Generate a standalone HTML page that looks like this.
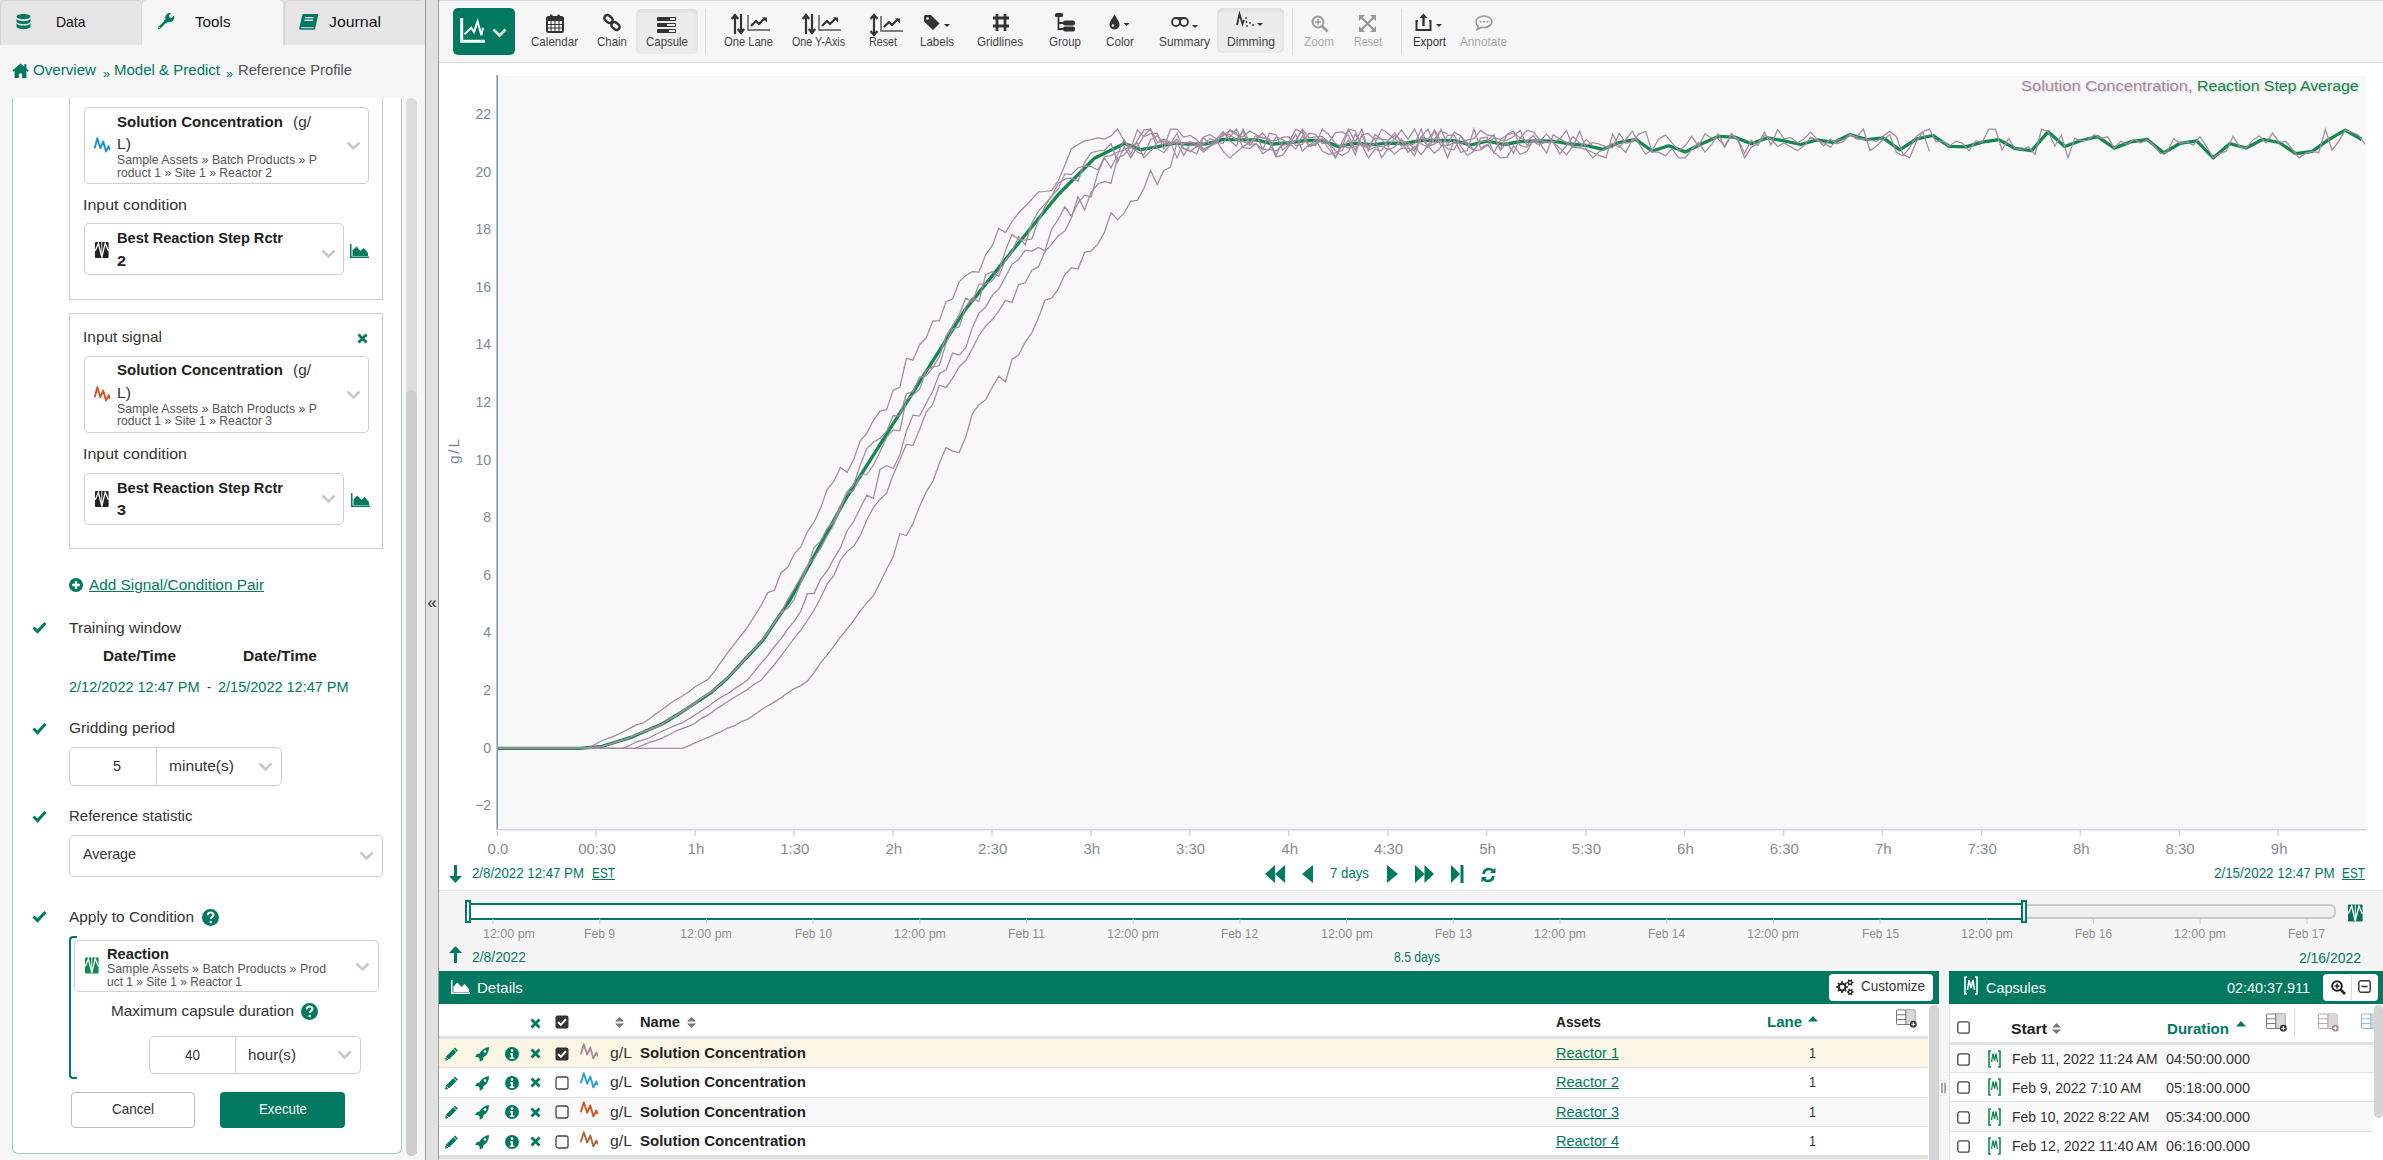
<!DOCTYPE html>
<html><head><meta charset="utf-8"><style>
html,body{margin:0;padding:0}
body{width:2383px;height:1160px;overflow:hidden;position:relative;background:#fff;font-family:"Liberation Sans",sans-serif}
.t{position:absolute;white-space:pre;line-height:1.117;transform-origin:0 0}
svg{overflow:visible}
</style></head><body>
<div style="position:absolute;left:0px;top:0px;width:425px;height:1160px;background:#f6f6f6"></div>
<div style="position:absolute;left:0px;top:0px;width:425px;height:45px;background:#e4e4e4"></div>
<div style="position:absolute;left:0px;top:0px;width:142px;height:45px;background:#e6e6e6;border-radius:5px 5px 0 0;box-shadow:inset 1px 1px 0 #d4d4d4, inset -1px 0 0 #d4d4d4"></div>
<div style="position:absolute;left:284px;top:0px;width:141px;height:45px;background:#e6e6e6;border-radius:5px 5px 0 0;box-shadow:inset 1px 1px 0 #d4d4d4"></div>
<div style="position:absolute;left:141px;top:0px;width:143px;height:45px;background:#f6f6f6;border-radius:5px 5px 0 0;box-shadow:inset 1px 0 0 #dadada, inset -1px 0 0 #dadada"></div>
<div style="position:absolute;left:142px;top:44px;width:141px;height:2px;background:#f6f6f6"></div>
<svg style="position:absolute;left:16px;top:14px;" width="15" height="16" viewBox="0 0 15 16"><g fill="#007960"><ellipse cx="7.5" cy="2.6" rx="7" ry="2.6"/><path d="M0.5 4.6c0 1.5 3.1 2.6 7 2.6s7-1.1 7-2.6v3c0 1.5-3.1 2.6-7 2.6s-7-1.1-7-2.6z"/><path d="M0.5 9c0 1.5 3.1 2.6 7 2.6s7-1.1 7-2.6v3.6c0 1.5-3.1 2.6-7 2.6s-7-1.1-7-2.6z"/></g></svg>
<svg style="position:absolute;left:157px;top:13px;" width="18" height="17" viewBox="0 0 18 17"><path fill="none" stroke="#007960" stroke-width="2.6" stroke-linecap="round" d="M2.2 14.8L9.2 7.8"/><path fill="#007960" d="M16.9 2.6l-2.3 2.3-2.1-.5-.5-2.1L14.3.1c-1.7-.4-3.5.1-4.7 1.3-1.3 1.3-1.7 3.2-1.1 4.8l-1.6 1.6 2.6 2.6 1.6-1.6c1.6.6 3.5.2 4.8-1.1 1.2-1.2 1.6-3 1.3-4.7z"/><circle cx="2.3" cy="14.7" r=".6" fill="#f6f6f6"/></svg>
<svg style="position:absolute;left:299px;top:14px;" width="19" height="16" viewBox="0 0 19 16"><path fill="#007960" d="M4.5 0H18.5c.5 0 .8.4.7.9L16.2 14.2c-.2.9-.9 1.5-1.8 1.5H1.2c-.7 0-1.1-.6-1-1.2L.7 12.2 3.3 1C3.5.4 4 0 4.5 0z"/><path fill="#e6e6e6" d="M6.2 3h8.5l-.3 1.3H5.9zM5.6 5.6h8.5l-.3 1.3H5.3zM2.2 13.2h12.6l-.3 1.1H2z"/></svg>
<svg style="position:absolute;left:12px;top:63px;" width="17" height="15" viewBox="0 0 17 15"><path fill="#007960" d="M8.5 0.6L0.3 7.6l1 1.2 1.3-1.1V15h4.3v-4.6h3.2V15h4.3V7.7l1.3 1.1 1-1.2-2.3-2V1.2h-2.2v2.6z"/></svg>
<div style="position:absolute;left:12px;top:98px;width:390px;height:1056px;background:#fff;border:1px solid #9fcfc3;border-top:none;border-radius:0 0 6px 6px;box-sizing:border-box"></div>
<div style="position:absolute;left:406px;top:98px;width:11px;height:1058px;background:#dcdcdc;border-radius:6px"></div>
<div style="position:absolute;left:406px;top:390px;width:11px;height:766px;background:#cfcfcf;border-radius:6px"></div>
<div style="position:absolute;left:425px;top:0px;width:14px;height:1160px;background:#e1e1e1;border-left:1px solid #999;border-right:1px solid #999;box-sizing:border-box"></div>
<div style="position:absolute;left:69px;top:98px;width:314px;height:202px;border:1px solid #cfcfcf;border-top:none;box-sizing:border-box"></div>
<div style="position:absolute;left:83.5px;top:106.5px;width:285px;height:77px;border:1px solid #cfcfcf;border-radius:5px;box-sizing:border-box;background:#fff"></div>
<svg style="position:absolute;left:94px;top:137px;" width="17" height="16" viewBox="0 0 17 16"><path d="M0.9 10.5 L3.3 1.2 L6.4 11.2 L9.2 4.6 L12 14.6 L14.7 9.2 L15.4 12" fill="none" stroke="#1a8fd9" stroke-width="1.9" stroke-linejoin="round" stroke-linecap="round"/></svg>
<svg style="position:absolute;left:346px;top:141px;" width="15" height="10" viewBox="0 0 15 10"><path d="M1.5 1.5l6 6 6-6" fill="none" stroke="#c9c9c9" stroke-width="2.6"/></svg>
<div style="position:absolute;left:83.5px;top:223.3px;width:260px;height:52px;border:1px solid #cfcfcf;border-radius:5px;box-sizing:border-box;background:#fff"></div>
<svg style="position:absolute;left:95px;top:242px;" width="14" height="16" viewBox="0 0 14 16"><rect x="0" y="0" width="13.6" height="16" rx="1" fill="#222"/><path d="M0.3 8.8 L3.4 1.3 L6.8 15.2 M6.8 15.2 L10.2 1.3 L13.4 8.8" fill="none" stroke="#fff" stroke-width="1.3"/><path d="M6.8 0v16" stroke="#fff" stroke-width="0.9"/></svg>
<svg style="position:absolute;left:321px;top:249px;" width="15" height="10" viewBox="0 0 15 10"><path d="M1.5 1.5l6 6 6-6" fill="none" stroke="#c9c9c9" stroke-width="2.6"/></svg>
<svg style="position:absolute;left:350px;top:244px;" width="19" height="14" viewBox="0 0 19 14"><path d="M0 0v14h19v-1.5H1.5V0z" fill="#007960"/><path d="M2.5 12V6.5l4-4 4 4.5 3-3 4.5 5V12z" fill="#007960"/></svg>
<div style="position:absolute;left:69px;top:312.7px;width:314px;height:236px;border:1px solid #cfcfcf;box-sizing:border-box"></div>
<svg style="position:absolute;left:357px;top:333px;" width="11" height="11" viewBox="0 0 11 11"><path d="M1.5 1.5l8 8M9.5 1.5l-8 8" stroke="#007960" stroke-width="2.8"/></svg>
<div style="position:absolute;left:83.5px;top:355.5px;width:285px;height:77px;border:1px solid #cfcfcf;border-radius:5px;box-sizing:border-box;background:#fff"></div>
<svg style="position:absolute;left:94px;top:386px;" width="17" height="16" viewBox="0 0 17 16"><path d="M0.9 10.5 L3.3 1.2 L6.4 11.2 L9.2 4.6 L12 14.6 L14.7 9.2 L15.4 12" fill="none" stroke="#d2541f" stroke-width="1.9" stroke-linejoin="round" stroke-linecap="round"/></svg>
<svg style="position:absolute;left:346px;top:390px;" width="15" height="10" viewBox="0 0 15 10"><path d="M1.5 1.5l6 6 6-6" fill="none" stroke="#c9c9c9" stroke-width="2.6"/></svg>
<div style="position:absolute;left:83.5px;top:472.6px;width:260px;height:52px;border:1px solid #cfcfcf;border-radius:5px;box-sizing:border-box;background:#fff"></div>
<svg style="position:absolute;left:95px;top:491px;" width="14" height="16" viewBox="0 0 14 16"><rect x="0" y="0" width="13.6" height="16" rx="1" fill="#222"/><path d="M0.3 8.8 L3.4 1.3 L6.8 15.2 M6.8 15.2 L10.2 1.3 L13.4 8.8" fill="none" stroke="#fff" stroke-width="1.3"/><path d="M6.8 0v16" stroke="#fff" stroke-width="0.9"/></svg>
<svg style="position:absolute;left:321px;top:494px;" width="15" height="10" viewBox="0 0 15 10"><path d="M1.5 1.5l6 6 6-6" fill="none" stroke="#c9c9c9" stroke-width="2.6"/></svg>
<svg style="position:absolute;left:351px;top:493px;" width="19" height="14" viewBox="0 0 19 14"><path d="M0 0v14h19v-1.5H1.5V0z" fill="#007960"/><path d="M2.5 12V6.5l4-4 4 4.5 3-3 4.5 5V12z" fill="#007960"/></svg>
<svg style="position:absolute;left:69px;top:578px;" width="14" height="14" viewBox="0 0 14 14"><circle cx="7" cy="7" r="7" fill="#007960"/><path d="M7 3.2v7.6M3.2 7h7.6" stroke="#fff" stroke-width="2.4"/></svg>
<svg style="position:absolute;left:32px;top:621px;" width="15" height="12" viewBox="0 0 15 12"><path d="M1.5 6.5l4 4 8-8.5" fill="none" stroke="#007960" stroke-width="3"/></svg>
<svg style="position:absolute;left:32px;top:722px;" width="15" height="12" viewBox="0 0 15 12"><path d="M1.5 6.5l4 4 8-8.5" fill="none" stroke="#007960" stroke-width="3"/></svg>
<div style="position:absolute;left:69px;top:746.7px;width:213px;height:39px;border:1px solid #cfcfcf;border-radius:5px;box-sizing:border-box;background:#fff"></div>
<div style="position:absolute;left:156px;top:747px;width:1px;height:38px;background:#cfcfcf"></div>
<svg style="position:absolute;left:258px;top:762px;" width="15" height="10" viewBox="0 0 15 10"><path d="M1.5 1.5l6 6 6-6" fill="none" stroke="#c9c9c9" stroke-width="2.6"/></svg>
<svg style="position:absolute;left:32px;top:810px;" width="15" height="12" viewBox="0 0 15 12"><path d="M1.5 6.5l4 4 8-8.5" fill="none" stroke="#007960" stroke-width="3"/></svg>
<div style="position:absolute;left:69px;top:834.6px;width:314px;height:42px;border:1px solid #cfcfcf;border-radius:5px;box-sizing:border-box;background:#fff"></div>
<svg style="position:absolute;left:359px;top:851px;" width="15" height="10" viewBox="0 0 15 10"><path d="M1.5 1.5l6 6 6-6" fill="none" stroke="#c9c9c9" stroke-width="2.6"/></svg>
<svg style="position:absolute;left:32px;top:910px;" width="15" height="12" viewBox="0 0 15 12"><path d="M1.5 6.5l4 4 8-8.5" fill="none" stroke="#007960" stroke-width="3"/></svg>
<svg style="position:absolute;left:202px;top:909px;" width="17" height="17" viewBox="0 0 17 17"><circle cx="8.5" cy="8.5" r="8.5" fill="#007960"/><path d="M5.8 6.3c0-1.7 1.2-2.8 2.8-2.8s2.8 1 2.8 2.5c0 2-2.6 2-2.6 3.9" fill="none" stroke="#fff" stroke-width="2.1"/><circle cx="8.7" cy="13" r="1.25" fill="#fff"/></svg>
<div style="position:absolute;left:69px;top:935.5px;width:8px;height:143px;border:2px solid #007960;border-right:none;border-radius:4px 0 0 4px;box-sizing:border-box"></div>
<div style="position:absolute;left:73.5px;top:939.6px;width:305px;height:52.6px;border:1px solid #cfcfcf;border-radius:5px;box-sizing:border-box;background:#fff"></div>
<svg style="position:absolute;left:85px;top:957px;" width="14" height="17" viewBox="0 0 14 16"><rect x="0" y="0" width="13.6" height="16" rx="1" fill="#0f8a4b"/><path d="M0.3 8.8 L3.4 1.3 L6.8 15.2 M6.8 15.2 L10.2 1.3 L13.4 8.8" fill="none" stroke="#fff" stroke-width="1.3"/><path d="M6.8 0v16" stroke="#fff" stroke-width="0.9"/></svg>
<svg style="position:absolute;left:355px;top:962px;" width="15" height="10" viewBox="0 0 15 10"><path d="M1.5 1.5l6 6 6-6" fill="none" stroke="#c9c9c9" stroke-width="2.6"/></svg>
<svg style="position:absolute;left:301px;top:1003px;" width="17" height="17" viewBox="0 0 17 17"><circle cx="8.5" cy="8.5" r="8.5" fill="#007960"/><path d="M5.8 6.3c0-1.7 1.2-2.8 2.8-2.8s2.8 1 2.8 2.5c0 2-2.6 2-2.6 3.9" fill="none" stroke="#fff" stroke-width="2.1"/><circle cx="8.7" cy="13" r="1.25" fill="#fff"/></svg>
<div style="position:absolute;left:148.5px;top:1035.7px;width:212px;height:38.6px;border:1px solid #cfcfcf;border-radius:5px;box-sizing:border-box;background:#fff"></div>
<div style="position:absolute;left:235px;top:1036px;width:1px;height:38px;background:#cfcfcf"></div>
<svg style="position:absolute;left:337px;top:1050px;" width="15" height="10" viewBox="0 0 15 10"><path d="M1.5 1.5l6 6 6-6" fill="none" stroke="#c9c9c9" stroke-width="2.6"/></svg>
<div style="position:absolute;left:70.5px;top:1092.4px;width:124px;height:35.8px;border:1px solid #bdbdbd;border-radius:4px;box-sizing:border-box;background:#fff"></div>
<div style="position:absolute;left:220px;top:1092.4px;width:125px;height:35.8px;background:#007960;border-radius:4px"></div>
<div style="position:absolute;left:439px;top:0px;width:1944px;height:63px;background:#f6f6f6;border-top:1px solid #dedede;border-bottom:1px solid #dcdcdc;box-sizing:border-box"></div>
<div style="position:absolute;left:439px;top:63px;width:1944px;height:827px;background:#fff"></div>
<div style="position:absolute;left:453px;top:8px;width:62px;height:47px;background:#007960;border-radius:5px"></div>
<svg style="position:absolute;left:460px;top:18px;" width="26" height="26" viewBox="0 0 26 26"><path d="M1.7 0v23.3H25" fill="none" stroke="#fff" stroke-width="3"/><path d="M4.5 16.2L11.2 9.8 14.1 14.1 17.6 3.4 21.4 17.3 23 9.8" fill="none" stroke="#fff" stroke-width="2"/></svg>
<svg style="position:absolute;left:492px;top:28px;" width="15" height="10" viewBox="0 0 15 10"><path d="M1.5 1.5l6 6 6-6" fill="none" stroke="#ddd" stroke-width="2.8"/></svg>
<svg style="position:absolute;left:546px;top:14px;" width="18" height="19" viewBox="0 0 18 19"><rect x="1" y="3" width="16" height="15" rx="1.5" fill="none" stroke="#333" stroke-width="2"/><rect x="1" y="3" width="16" height="4" fill="#333"/><rect x="4" y="0.5" width="2.5" height="5" rx="1" fill="#333"/><rect x="11.5" y="0.5" width="2.5" height="5" rx="1" fill="#333"/><path d="M1 10.5h16M1 14h16M5 7v11M9 7v11M13 7v11" stroke="#333" stroke-width="1"/></svg>
<svg style="position:absolute;left:603px;top:14px;" width="19" height="18" viewBox="0 0 19 18"><rect x="1" y="2" width="9" height="6" rx="3" transform="rotate(40 5.5 5)" fill="none" stroke="#333" stroke-width="2.4"/><rect x="8" y="9" width="9" height="6" rx="3" transform="rotate(40 12.5 12)" fill="none" stroke="#333" stroke-width="2.4"/></svg>
<div style="position:absolute;left:636px;top:9px;width:62px;height:45px;background:#ececec;border-radius:5px;box-shadow:inset 0 2px 4px rgba(0,0,0,.08)"></div>
<svg style="position:absolute;left:657px;top:17px;" width="20" height="16" viewBox="0 0 20 16"><rect x="0" y="0" width="19" height="4" rx="1" fill="#333"/><rect x="0" y="6" width="19" height="4" rx="1" fill="#333"/><rect x="0" y="12" width="19" height="4" rx="1" fill="#333"/><rect x="13" y="1" width="5" height="2" fill="#eee"/><rect x="10" y="7" width="8" height="2" fill="#eee"/><rect x="12" y="13" width="6" height="2" fill="#eee"/></svg>
<div style="position:absolute;left:705px;top:9px;width:1px;height:45px;background:#dcdcdc"></div>
<svg style="position:absolute;left:731px;top:14px;" width="14" height="20" viewBox="0 0 14 20"><path d="M4 1v19M0.8 5L4 1l3.2 4" fill="none" stroke="#333" stroke-width="2.2"/><path d="M10 0v19M6.8 15L10 19l3.2-4" fill="none" stroke="#333" stroke-width="2.2"/></svg>
<svg style="position:absolute;left:747px;top:14px;" width="24" height="17" viewBox="0 0 24 17"><path d="M1 1v15h22" fill="none" stroke="#555" stroke-width="1.4"/><path d="M4 12l5-5 3 3 6-6" fill="none" stroke="#333" stroke-width="2.2"/><path d="M15 3.5h5v5z" fill="#333"/></svg>
<svg style="position:absolute;left:802px;top:14px;" width="14" height="20" viewBox="0 0 14 20"><path d="M4 1v19M0.8 5L4 1l3.2 4" fill="none" stroke="#333" stroke-width="2.2"/><path d="M10 0v19M6.8 15L10 19l3.2-4" fill="none" stroke="#333" stroke-width="2.2"/></svg>
<svg style="position:absolute;left:818px;top:14px;" width="24" height="17" viewBox="0 0 24 17"><path d="M1 1v15h22" fill="none" stroke="#555" stroke-width="1.4"/><path d="M4 12l5-5 3 3 6-6" fill="none" stroke="#333" stroke-width="2.2"/><path d="M15 3.5h5v5z" fill="#333"/></svg>
<svg style="position:absolute;left:869px;top:14px;" width="10" height="22" viewBox="0 0 10 22"><path d="M5 1v20M1.5 5L5 1l3.5 4M1.5 17L5 21l3.5-4" fill="none" stroke="#333" stroke-width="2.2"/></svg>
<svg style="position:absolute;left:880px;top:15px;" width="23" height="17" viewBox="0 0 23 17"><path d="M1 1v15h22" fill="none" stroke="#555" stroke-width="1.4"/><path d="M4 12l5-5 3 3 6-6" fill="none" stroke="#333" stroke-width="2.2"/><path d="M15 3.5h5v5z" fill="#333"/></svg>
<svg style="position:absolute;left:924px;top:15px;" width="27" height="16" viewBox="0 0 27 16"><path d="M0 1.5C0 .7.7 0 1.5 0H7l8.5 8.5-6.5 6.5L0 6.5z" fill="#333"/><circle cx="3.5" cy="3.5" r="1.3" fill="#f6f6f6"/><path d="M20 9h6l-3 3z" fill="#333"/></svg>
<svg style="position:absolute;left:992px;top:13px;" width="18" height="19" viewBox="0 0 18 19"><path d="M5 1v17M13 1v17M1 5h16M1 13h16" stroke="#333" stroke-width="2.8"/></svg>
<svg style="position:absolute;left:1055px;top:13px;" width="20" height="18" viewBox="0 0 20 18"><rect x="0" y="0" width="8" height="4" rx="1.5" fill="#333"/><path d="M3.5 4v12h5M3.5 10h5" fill="none" stroke="#333" stroke-width="1.8"/><rect x="8" y="7.5" width="12" height="5" rx="2" fill="#333"/><rect x="8" y="13.5" width="12" height="5" rx="2" fill="#333"/></svg>
<svg style="position:absolute;left:1109px;top:14px;" width="22" height="16" viewBox="0 0 22 16"><path d="M5.5 0C4 4 0.5 7 0.5 10.5a5 5 0 0 0 10 0C10.5 7 7 4 5.5 0z" fill="#333"/><circle cx="4" cy="11.5" r="1.3" fill="#f6f6f6"/><path d="M14.5 9h6l-3 3z" fill="#333"/></svg>
<svg style="position:absolute;left:1171px;top:16px;" width="28" height="14" viewBox="0 0 28 14"><circle cx="5" cy="6" r="4" fill="none" stroke="#333" stroke-width="1.8"/><circle cx="13" cy="6" r="4" fill="none" stroke="#333" stroke-width="1.8"/><path d="M5 2h8" stroke="#333" stroke-width="1.8"/><path d="M21 9h6l-3 3z" fill="#333"/></svg>
<div style="position:absolute;left:1216.5px;top:8px;width:67px;height:45px;background:#ececec;border-radius:5px;box-shadow:inset 0 2px 4px rgba(0,0,0,.08)"></div>
<svg style="position:absolute;left:1236px;top:13px;" width="28" height="17" viewBox="0 0 28 17"><path d="M1 12L3.5 1l3 10L8 7" fill="none" stroke="#333" stroke-width="1.8"/><circle cx="10" cy="5" r=".9" fill="#333"/><circle cx="10.5" cy="9" r=".9" fill="#333"/><circle cx="11" cy="13" r=".9" fill="#333"/><circle cx="14" cy="10" r=".9" fill="#333"/><circle cx="17" cy="12" r=".9" fill="#333"/><path d="M21 10h6l-3 3z" fill="#333"/></svg>
<div style="position:absolute;left:1292px;top:8px;width:1px;height:47px;background:#dcdcdc"></div>
<svg style="position:absolute;left:1311px;top:15px;" width="18" height="18" viewBox="0 0 18 18"><circle cx="7" cy="7" r="5.5" fill="none" stroke="#999" stroke-width="2"/><path d="M11 11l5.5 5.5" stroke="#999" stroke-width="2.6"/><path d="M7 4v6M4 7h6" stroke="#999" stroke-width="1.4"/></svg>
<svg style="position:absolute;left:1359px;top:15px;" width="17" height="17" viewBox="0 0 17 17"><path d="M1 1l15 15M16 1L1 16" stroke="#999" stroke-width="2.4"/><path d="M0 0h6L0 6zM17 0h-6l6 6zM0 17h6L0 11zM17 17h-6l6-6z" fill="#999"/></svg>
<div style="position:absolute;left:1400.5px;top:9px;width:1px;height:45px;background:#dcdcdc"></div>
<svg style="position:absolute;left:1415px;top:13px;" width="28" height="18" viewBox="0 0 28 18"><path d="M3 8H1.5v9h14V8H14" fill="none" stroke="#333" stroke-width="2"/><path d="M8.5 13V3" stroke="#333" stroke-width="2.4"/><path d="M4.5 5L8.5 0.5 12.5 5z" fill="#333"/><path d="M21 11h6l-3 3z" fill="#333"/></svg>
<svg style="position:absolute;left:1475px;top:15px;" width="18" height="15" viewBox="0 0 18 15"><path d="M9 1c4.4 0 8 2.6 8 5.7S13.4 12.5 9 12.5c-.8 0-1.6-.1-2.3-.3L2 14.5l1.3-3.3C1.9 10.1 1 8.5 1 6.7 1 3.6 4.6 1 9 1z" fill="none" stroke="#999" stroke-width="1.6"/><circle cx="5.5" cy="6.8" r="1" fill="#999"/><circle cx="9" cy="6.8" r="1" fill="#999"/><circle cx="12.5" cy="6.8" r="1" fill="#999"/></svg>
<svg style="position:absolute;left:0;top:0" width="2383" height="1160"><rect x="498" y="76" width="1868" height="754" fill="#f8f8f8"/>
<path d="M497.2,748.3 L513.7,748.3 L530.2,748.3 L546.7,748.3 L563.2,748.3 L579.7,748.3 L596.2,746.9 L602.0,746.3 L612.7,743.0 L629.2,737.9 L632.0,737.1 L645.7,731.1 L662.2,723.9 L663.0,723.5 L678.7,714.0 L680.0,713.2 L695.2,703.1 L711.0,692.7 L711.7,692.1 L728.0,677.7 L728.2,677.5 L744.7,659.7 L761.2,642.0 L763.0,640.0 L777.7,618.2 L790.0,600.0 L794.2,592.3 L810.7,562.4 L827.2,532.4 L843.7,502.4 L845.0,500.0 L860.2,476.0 L876.7,449.8 L893.2,423.7 L909.7,397.6 L926.2,371.4 L942.7,345.3 L959.2,319.2 L965.0,310.0 L975.7,296.6 L992.2,275.9 L1008.7,255.3 L1011.7,251.5 L1025.2,235.0 L1041.7,214.8 L1058.2,194.6 L1058.3,194.5 L1074.7,178.0 L1091.2,161.5 L1094.5,158.2 L1107.7,151.8 L1124.2,143.7 L1124.7,143.5 L1140.7,149.7 L1157.2,146.9 L1173.7,143.1 L1190.2,144.3 L1206.7,143.8 L1223.2,139.3 L1239.7,139.9 L1256.2,139.8 L1272.7,144.0 L1289.2,142.9 L1305.7,140.5 L1322.2,140.4 L1338.7,146.6 L1355.2,143.2 L1371.7,144.6 L1388.2,143.1 L1404.7,143.3 L1421.2,140.4 L1437.7,140.5 L1454.2,140.7 L1470.7,145.0 L1487.2,141.2 L1503.7,144.5 L1520.2,141.6 L1536.7,140.9 L1553.2,141.1 L1569.7,143.8 L1586.2,145.4 L1602.7,149.4 L1619.2,142.5 L1635.7,139.3 L1652.2,151.0 L1668.7,145.7 L1685.2,151.9 L1701.7,143.8 L1718.2,136.4 L1734.7,137.1 L1751.2,143.7 L1767.7,137.8 L1784.2,140.9 L1800.7,144.5 L1817.2,139.9 L1833.7,142.5 L1850.2,134.5 L1866.7,139.6 L1883.2,137.9 L1899.7,149.8 L1916.2,139.2 L1932.7,135.5 L1949.2,146.3 L1965.7,146.9 L1982.2,142.1 L1998.7,139.6 L2015.2,148.5 L2031.7,150.6 L2048.2,131.7 L2064.7,146.5 L2081.2,140.5 L2097.7,136.6 L2114.2,148.1 L2130.7,141.9 L2147.2,139.5 L2163.7,152.9 L2180.2,143.3 L2196.7,140.8 L2213.2,157.9 L2229.7,143.7 L2246.2,148.0 L2262.7,139.4 L2279.2,142.5 L2295.7,153.6 L2312.2,151.3 L2328.7,139.6 L2345.2,130.1 L2361.7,139.5" fill="none" stroke="#128a4e" stroke-width="3.3" stroke-linejoin="round"/>
<path d="M497.2,748.3 L503.8,748.3 L510.4,748.3 L517.0,748.3 L523.6,748.3 L530.2,748.3 L536.8,748.3 L543.4,748.3 L550.0,748.3 L556.6,748.3 L563.2,748.3 L569.8,748.3 L576.4,748.3 L583.0,748.3 L589.6,747.2 L596.2,743.7 L602.8,740.2 L609.4,737.8 L616.0,735.4 L622.6,732.0 L629.2,728.6 L635.8,725.2 L642.4,723.2 L649.0,719.2 L655.6,714.0 L662.2,709.4 L668.8,704.4 L675.4,700.1 L682.0,696.2 L688.6,692.0 L695.2,686.7 L701.8,683.0 L708.4,679.0 L715.0,670.7 L721.6,661.1 L728.2,651.8 L734.8,643.6 L741.4,635.0 L748.0,626.4 L754.6,615.8 L761.2,605.3 L767.8,592.6 L774.4,590.3 L781.0,572.7 L787.6,567.6 L794.2,553.9 L800.8,547.0 L807.4,531.7 L814.0,522.2 L820.6,507.9 L827.2,489.4 L833.8,481.4 L840.4,467.5 L847.0,472.6 L853.6,459.6 L860.2,440.8 L866.8,433.3 L873.4,420.3 L880.0,411.1 L886.6,409.6 L893.2,390.1 L899.8,387.2 L906.4,358.5 L913.0,360.2 L919.6,344.7 L926.2,337.8 L932.8,321.2 L939.4,320.7 L946.0,301.6 L952.6,298.9 L959.2,281.8 L965.8,275.4 L972.4,271.6 L979.0,272.0 L985.6,254.8 L992.2,245.7 L998.8,228.4 L1005.4,232.6 L1012.0,221.6 L1018.6,212.9 L1025.2,206.3 L1031.8,199.3 L1038.4,191.9 L1045.0,191.5 L1051.6,190.4 L1058.2,180.8 L1064.8,165.5 L1071.4,148.7 L1078.0,144.5 L1084.6,140.9 L1091.2,139.7 L1097.8,137.8 L1104.4,139.0 L1111.0,135.9 L1117.6,129.1 L1124.2,141.0 L1130.8,148.0 L1137.4,129.8 L1144.0,136.8 L1150.6,133.6 L1157.2,133.2 L1163.8,148.7 L1170.4,129.1 L1177.0,129.1 L1183.6,137.1 L1190.2,135.4 L1196.8,139.7 L1203.4,149.0 L1210.0,146.3 L1216.6,141.6 L1223.2,134.1 L1229.8,134.7 L1236.4,140.0 L1243.0,131.7 L1249.6,145.3 L1256.2,138.0 L1262.8,132.9 L1269.4,142.1 L1276.0,156.9 L1282.6,155.2 L1289.2,145.8 L1295.8,140.2 L1302.4,130.3 L1309.0,146.7 L1315.6,144.6 L1322.2,138.8 L1328.8,143.1 L1335.4,157.9 L1342.0,142.3 L1348.6,129.1 L1355.2,130.7 L1361.8,146.1 L1368.4,147.6 L1375.0,143.2 L1381.6,129.1 L1388.2,133.7 L1394.8,139.2 L1401.4,129.9 L1408.0,139.4 L1414.6,129.1 L1421.2,143.8 L1427.8,147.3 L1434.4,139.2 L1441.0,130.9 L1447.6,134.0" fill="none" stroke="#a48ba0" stroke-width="1.25" stroke-linejoin="miter"/>
<path d="M497.2,748.3 L503.8,748.3 L510.4,748.3 L517.0,748.3 L523.6,748.3 L530.2,748.3 L536.8,748.3 L543.4,748.3 L550.0,748.3 L556.6,748.3 L563.2,748.3 L569.8,748.3 L576.4,748.3 L583.0,748.3 L589.6,748.3 L596.2,747.1 L602.8,746.2 L609.4,744.3 L616.0,741.6 L622.6,739.8 L629.2,738.0 L635.8,734.6 L642.4,732.5 L649.0,730.2 L655.6,727.6 L662.2,724.4 L668.8,719.9 L675.4,715.5 L682.0,711.2 L688.6,706.6 L695.2,702.3 L701.8,698.2 L708.4,693.6 L715.0,688.6 L721.6,683.4 L728.2,677.1 L734.8,670.2 L741.4,663.3 L748.0,655.3 L754.6,648.4 L761.2,641.9 L767.8,632.9 L774.4,622.2 L781.0,613.1 L787.6,599.8 L794.2,588.7 L800.8,577.4 L807.4,565.7 L814.0,558.3 L820.6,548.1 L827.2,535.8 L833.8,524.7 L840.4,508.8 L847.0,492.8 L853.6,490.4 L860.2,474.9 L866.8,474.5 L873.4,465.3 L880.0,451.7 L886.6,437.4 L893.2,429.9 L899.8,430.8 L906.4,399.6 L913.0,395.0 L919.6,389.4 L926.2,370.3 L932.8,366.9 L939.4,365.5 L946.0,343.1 L952.6,329.0 L959.2,327.1 L965.8,306.5 L972.4,297.9 L979.0,301.6 L985.6,274.8 L992.2,271.7 L998.8,276.3 L1005.4,260.1 L1012.0,251.6 L1018.6,236.7 L1025.2,244.6 L1031.8,223.2 L1038.4,211.3 L1045.0,203.8 L1051.6,196.6 L1058.2,183.3 L1064.8,179.1 L1071.4,178.1 L1078.0,181.1 L1084.6,162.4 L1091.2,152.7 L1097.8,151.0 L1104.4,150.4 L1111.0,143.6 L1117.6,162.3 L1124.2,146.8 L1130.8,157.9 L1137.4,146.2 L1144.0,135.7 L1150.6,129.1 L1157.2,141.8 L1163.8,139.1 L1170.4,142.1 L1177.0,157.9 L1183.6,142.4 L1190.2,142.9 L1196.8,142.4 L1203.4,150.2 L1210.0,145.8 L1216.6,143.3 L1223.2,133.0 L1229.8,137.1 L1236.4,129.1 L1243.0,141.3 L1249.6,144.4 L1256.2,143.9 L1262.8,149.6 L1269.4,133.4 L1276.0,134.5 L1282.6,150.0 L1289.2,144.6 L1295.8,134.4 L1302.4,151.1 L1309.0,144.6 L1315.6,145.4 L1322.2,129.1 L1328.8,134.8 L1335.4,143.3 L1342.0,147.5 L1348.6,129.6 L1355.2,141.9 L1361.8,129.1 L1368.4,150.4 L1375.0,147.1 L1381.6,146.3 L1388.2,149.6 L1394.8,147.0 L1401.4,138.9 L1408.0,146.8 L1414.6,155.6 L1421.2,136.8 L1427.8,129.2 L1434.4,143.6 L1441.0,140.7 L1447.6,157.9 L1454.2,140.0 L1460.8,152.4 L1467.4,150.6 L1474.0,129.1 L1480.6,148.0 L1487.2,144.6 L1493.8,151.9 L1500.4,157.9 L1507.0,157.4 L1513.6,145.9 L1520.2,154.3 L1526.8,151.6 L1533.4,140.2 L1540.0,143.2 L1546.6,153.4 L1553.2,134.8 L1559.8,139.1 L1566.4,130.5 L1573.0,146.9 L1579.6,131.0 L1586.2,149.4 L1592.8,157.9 L1599.4,151.5 L1606.0,148.9 L1612.6,143.0 L1619.2,147.4 L1625.8,139.5 L1632.4,131.2 L1639.0,144.0 L1645.6,154.2 L1652.2,150.0 L1658.8,139.0 L1665.4,135.1 L1672.0,142.9 L1678.6,150.7 L1685.2,145.8 L1691.8,136.4 L1698.4,146.3 L1705.0,133.9 L1711.6,138.0 L1718.2,138.9 L1724.8,146.5 L1731.4,133.5 L1738.0,139.3 L1744.6,153.4 L1751.2,140.2 L1757.8,145.3 L1764.4,135.3 L1771.0,139.0 L1777.6,146.5 L1784.2,142.9 L1790.8,146.8 L1797.4,150.8 L1804.0,145.6 L1810.6,137.3 L1817.2,140.4 L1823.8,142.8 L1830.4,147.3 L1837.0,140.0 L1843.6,139.8 L1850.2,134.3 L1856.8,137.1 L1863.4,129.1 L1870.0,150.5 L1876.6,146.0 L1883.2,139.8 L1889.8,134.8 L1896.4,152.2 L1903.0,155.8 L1909.6,147.8 L1916.2,136.4 L1922.8,132.0 L1929.4,151.1" fill="none" stroke="#a48ba0" stroke-width="1.25" stroke-linejoin="miter"/>
<path d="M497.2,748.3 L503.8,748.3 L510.4,748.3 L517.0,748.3 L523.6,748.3 L530.2,748.3 L536.8,748.3 L543.4,748.3 L550.0,748.3 L556.6,748.3 L563.2,748.3 L569.8,748.3 L576.4,748.3 L583.0,748.3 L589.6,748.3 L596.2,748.3 L602.8,748.3 L609.4,748.3 L616.0,748.3 L622.6,748.3 L629.2,745.7 L635.8,742.1 L642.4,740.1 L649.0,738.0 L655.6,734.5 L662.2,731.2 L668.8,728.3 L675.4,725.4 L682.0,722.9 L688.6,719.0 L695.2,714.9 L701.8,710.5 L708.4,706.2 L715.0,701.3 L721.6,696.9 L728.2,693.5 L734.8,688.6 L741.4,684.4 L748.0,679.6 L754.6,671.1 L761.2,662.9 L767.8,655.7 L774.4,646.5 L781.0,638.8 L787.6,629.2 L794.2,621.3 L800.8,611.1 L807.4,593.7 L814.0,593.6 L820.6,579.1 L827.2,571.0 L833.8,558.6 L840.4,547.9 L847.0,531.0 L853.6,521.5 L860.2,508.3 L866.8,495.2 L873.4,498.4 L880.0,469.5 L886.6,465.6 L893.2,468.5 L899.8,454.9 L906.4,431.2 L913.0,415.2 L919.6,416.0 L926.2,403.3 L932.8,391.0 L939.4,373.6 L946.0,369.9 L952.6,353.1 L959.2,355.1 L965.8,347.7 L972.4,327.4 L979.0,313.0 L985.6,307.3 L992.2,295.4 L998.8,289.0 L1005.4,277.0 L1012.0,264.3 L1018.6,259.5 L1025.2,250.1 L1031.8,251.1 L1038.4,247.5 L1045.0,250.8 L1051.6,229.3 L1058.2,219.5 L1064.8,206.8 L1071.4,216.2 L1078.0,203.2 L1084.6,195.2 L1091.2,196.9 L1097.8,172.9 L1104.4,157.7 L1111.0,167.8 L1117.6,154.5 L1124.2,139.6 L1130.8,154.4 L1137.4,140.1 L1144.0,129.9 L1150.6,129.1 L1157.2,148.4 L1163.8,152.7 L1170.4,144.2 L1177.0,133.3 L1183.6,149.0 L1190.2,150.5 L1196.8,153.9 L1203.4,137.4 L1210.0,144.9 L1216.6,138.5 L1223.2,135.7 L1229.8,130.6 L1236.4,134.8 L1243.0,136.8 L1249.6,131.0 L1256.2,134.4 L1262.8,149.5 L1269.4,149.0 L1276.0,137.3 L1282.6,139.3 L1289.2,143.9 L1295.8,140.8 L1302.4,129.1 L1309.0,137.9 L1315.6,136.8 L1322.2,136.6 L1328.8,142.3 L1335.4,132.7 L1342.0,132.0 L1348.6,135.4 L1355.2,150.5 L1361.8,135.0 L1368.4,133.5 L1375.0,139.8 L1381.6,157.9 L1388.2,148.1 L1394.8,153.9 L1401.4,148.1 L1408.0,148.3 L1414.6,150.9 L1421.2,137.1 L1427.8,139.4 L1434.4,131.3 L1441.0,146.0 L1447.6,145.0 L1454.2,132.2 L1460.8,136.0 L1467.4,145.8 L1474.0,150.5 L1480.6,149.8 L1487.2,145.5 L1493.8,137.8 L1500.4,139.4 L1507.0,135.2 L1513.6,133.0 L1520.2,138.0 L1526.8,130.4 L1533.4,132.1 L1540.0,140.1 L1546.6,142.7 L1553.2,142.5 L1559.8,148.1 L1566.4,154.9 L1573.0,146.3 L1579.6,147.7 L1586.2,139.4 L1592.8,145.9" fill="none" stroke="#a48ba0" stroke-width="1.25" stroke-linejoin="miter"/>
<path d="M497.2,748.3 L503.8,748.3 L510.4,748.3 L517.0,748.3 L523.6,748.3 L530.2,748.3 L536.8,748.3 L543.4,748.3 L550.0,748.3 L556.6,748.3 L563.2,748.3 L569.8,748.3 L576.4,748.3 L583.0,748.3 L589.6,748.3 L596.2,748.3 L602.8,748.3 L609.4,748.3 L616.0,748.3 L622.6,748.3 L629.2,748.3 L635.8,748.3 L642.4,745.4 L649.0,742.4 L655.6,740.6 L662.2,738.1 L668.8,734.7 L675.4,731.2 L682.0,728.6 L688.6,726.4 L695.2,723.3 L701.8,718.1 L708.4,714.9 L715.0,709.8 L721.6,705.6 L728.2,701.3 L734.8,697.0 L741.4,693.3 L748.0,689.1 L754.6,683.9 L761.2,680.3 L767.8,672.2 L774.4,664.5 L781.0,656.0 L787.6,647.0 L794.2,638.3 L800.8,630.1 L807.4,620.5 L814.0,610.3 L820.6,598.0 L827.2,583.9 L833.8,575.6 L840.4,560.2 L847.0,551.4 L853.6,546.4 L860.2,535.7 L866.8,519.9 L873.4,507.6 L880.0,499.4 L886.6,493.1 L893.2,474.8 L899.8,459.9 L906.4,444.4 L913.0,445.4 L919.6,429.4 L926.2,412.0 L932.8,404.3 L939.4,385.2 L946.0,387.7 L952.6,378.2 L959.2,366.7 L965.8,360.3 L972.4,348.6 L979.0,335.5 L985.6,326.2 L992.2,319.7 L998.8,311.2 L1005.4,300.4 L1012.0,302.4 L1018.6,284.6 L1025.2,282.8 L1031.8,270.3 L1038.4,267.0 L1045.0,251.4 L1051.6,244.4 L1058.2,235.8 L1064.8,231.2 L1071.4,217.8 L1078.0,196.6 L1084.6,209.9 L1091.2,192.0 L1097.8,184.0 L1104.4,181.6 L1111.0,183.2 L1117.6,157.7 L1124.2,155.1 L1130.8,146.4 L1137.4,152.0 L1144.0,154.9 L1150.6,139.7 L1157.2,135.7 L1163.8,143.0 L1170.4,145.0 L1177.0,139.2 L1183.6,148.1 L1190.2,151.4 L1196.8,146.6 L1203.4,136.9 L1210.0,134.6 L1216.6,138.9 L1223.2,131.6 L1229.8,140.5 L1236.4,146.1 L1243.0,129.1 L1249.6,142.2 L1256.2,138.4 L1262.8,137.5 L1269.4,140.4 L1276.0,140.7 L1282.6,137.2 L1289.2,137.0 L1295.8,145.6 L1302.4,144.1 L1309.0,133.1 L1315.6,134.3 L1322.2,143.5 L1328.8,143.0 L1335.4,150.7 L1342.0,155.7 L1348.6,151.7 L1355.2,134.1 L1361.8,144.9 L1368.4,157.9 L1375.0,149.3 L1381.6,150.6 L1388.2,140.3 L1394.8,132.9 L1401.4,142.2 L1408.0,142.1 L1414.6,149.7 L1421.2,136.4 L1427.8,146.5 L1434.4,144.2 L1441.0,129.1 L1447.6,145.4 L1454.2,142.8 L1460.8,143.5 L1467.4,139.9 L1474.0,138.6 L1480.6,130.4 L1487.2,135.1 L1493.8,135.9 L1500.4,150.1 L1507.0,142.6 L1513.6,153.2 L1520.2,137.6 L1526.8,141.7 L1533.4,135.4 L1540.0,144.3 L1546.6,141.9 L1553.2,142.2 L1559.8,138.7 L1566.4,142.5 L1573.0,147.5 L1579.6,147.6 L1586.2,149.7 L1592.8,152.5 L1599.4,155.7 L1606.0,157.9 L1612.6,134.1 L1619.2,145.7 L1625.8,152.5 L1632.4,139.1 L1639.0,139.7" fill="none" stroke="#a48ba0" stroke-width="1.25" stroke-linejoin="miter"/>
<path d="M497.2,748.3 L503.8,748.3 L510.4,748.3 L517.0,748.3 L523.6,748.3 L530.2,748.3 L536.8,748.3 L543.4,748.3 L550.0,748.3 L556.6,748.3 L563.2,748.3 L569.8,748.3 L576.4,748.3 L583.0,748.3 L589.6,748.3 L596.2,748.3 L602.8,748.3 L609.4,748.3 L616.0,748.3 L622.6,748.3 L629.2,748.3 L635.8,748.3 L642.4,748.3 L649.0,748.3 L655.6,748.3 L662.2,748.3 L668.8,748.3 L675.4,748.3 L682.0,748.3 L688.6,745.8 L695.2,742.9 L701.8,740.0 L708.4,737.4 L715.0,734.2 L721.6,731.3 L728.2,727.8 L734.8,725.7 L741.4,721.6 L748.0,719.1 L754.6,714.4 L761.2,709.7 L767.8,705.8 L774.4,702.1 L781.0,697.7 L787.6,693.1 L794.2,688.6 L800.8,685.6 L807.4,681.1 L814.0,672.7 L820.6,662.9 L827.2,654.9 L833.8,646.2 L840.4,637.2 L847.0,629.2 L853.6,620.6 L860.2,610.9 L866.8,602.8 L873.4,595.6 L880.0,582.7 L886.6,569.0 L893.2,557.1 L899.8,533.7 L906.4,535.6 L913.0,523.6 L919.6,506.4 L926.2,491.9 L932.8,481.4 L939.4,463.3 L946.0,447.6 L952.6,451.1 L959.2,452.5 L965.8,436.7 L972.4,413.5 L979.0,404.7 L985.6,399.9 L992.2,387.2 L998.8,376.2 L1005.4,381.8 L1012.0,359.4 L1018.6,355.1 L1025.2,342.1 L1031.8,332.9 L1038.4,318.1 L1045.0,300.2 L1051.6,298.2 L1058.2,289.1 L1064.8,274.5 L1071.4,267.7 L1078.0,269.0 L1084.6,252.3 L1091.2,250.9 L1097.8,244.1 L1104.4,232.5 L1111.0,212.7 L1117.6,219.7 L1124.2,213.1 L1130.8,201.1 L1137.4,200.3 L1144.0,188.2 L1150.6,170.4 L1157.2,184.5 L1163.8,170.5 L1170.4,167.3 L1177.0,142.4 L1183.6,143.5 L1190.2,141.7 L1196.8,144.9 L1203.4,152.0 L1210.0,146.5 L1216.6,142.3 L1223.2,143.4 L1229.8,129.6 L1236.4,133.0 L1243.0,147.7 L1249.6,148.6 L1256.2,143.5 L1262.8,153.8 L1269.4,149.2 L1276.0,151.1 L1282.6,145.3 L1289.2,143.6 L1295.8,149.1 L1302.4,135.7 L1309.0,146.0 L1315.6,139.5 L1322.2,151.0 L1328.8,154.4 L1335.4,152.9 L1342.0,150.6 L1348.6,139.9 L1355.2,154.8 L1361.8,134.6 L1368.4,150.6 L1375.0,134.5 L1381.6,139.2 L1388.2,146.5 L1394.8,138.2 L1401.4,146.0 L1408.0,144.9 L1414.6,143.9 L1421.2,129.1 L1427.8,146.8 L1434.4,129.7 L1441.0,141.4 L1447.6,148.9 L1454.2,149.8 L1460.8,136.1 L1467.4,143.0 L1474.0,150.1 L1480.6,141.4 L1487.2,141.0 L1493.8,134.6 L1500.4,150.0 L1507.0,134.3 L1513.6,131.0 L1520.2,145.4 L1526.8,147.4 L1533.4,141.6 L1540.0,145.4" fill="none" stroke="#a48ba0" stroke-width="1.25" stroke-linejoin="miter"/>
<path d="M497.2,748.3 L503.8,748.3 L510.4,748.3 L517.0,748.3 L523.6,748.3 L530.2,748.3 L536.8,748.3 L543.4,748.3 L550.0,748.3 L556.6,748.3 L563.2,748.3 L569.8,748.3 L576.4,748.3 L583.0,748.3 L589.6,748.0 L596.2,746.6 L602.8,746.4 L609.4,743.9 L616.0,742.5 L622.6,739.8 L629.2,737.9 L635.8,734.7 L642.4,731.9 L649.0,729.4 L655.6,726.8 L662.2,723.7 L668.8,719.9 L675.4,716.4 L682.0,711.7 L688.6,708.4 L695.2,703.5 L701.8,697.9 L708.4,693.9 L715.0,689.6 L721.6,683.0 L728.2,677.3 L734.8,670.6 L741.4,663.6 L748.0,656.2 L754.6,648.7 L761.2,641.9 L767.8,632.0 L774.4,623.1 L781.0,612.9 L787.6,608.3 L794.2,599.3 L800.8,582.4 L807.4,567.0 L814.0,547.5 L820.6,541.0 L827.2,528.2 L833.8,521.4 L840.4,506.1 L847.0,491.9 L853.6,484.9 L860.2,465.2 L866.8,448.6 L873.4,442.3 L880.0,438.2 L886.6,431.1 L893.2,415.6 L899.8,415.9 L906.4,394.0 L913.0,391.5 L919.6,377.1 L926.2,375.9 L932.8,367.4 L939.4,356.7 L946.0,335.9 L952.6,325.5 L959.2,314.8 L965.8,298.1 L972.4,301.9 L979.0,284.1 L985.6,283.9 L992.2,280.8 L998.8,271.7 L1005.4,250.7 L1012.0,234.3 L1018.6,239.5 L1025.2,240.2 L1031.8,238.9 L1038.4,220.9 L1045.0,206.3 L1051.6,196.2 L1058.2,189.0 L1064.8,173.8 L1071.4,174.5 L1078.0,167.7 L1084.6,166.2 L1091.2,166.7 L1097.8,170.0 L1104.4,157.0 L1111.0,155.3 L1117.6,152.0 L1124.2,150.2 L1130.8,145.3 L1137.4,143.1 L1144.0,157.9 L1150.6,151.3 L1157.2,142.7 L1163.8,140.6 L1170.4,144.1 L1177.0,142.3 L1183.6,155.4 L1190.2,144.9 L1196.8,146.1 L1203.4,143.9 L1210.0,138.6 L1216.6,140.8 L1223.2,151.4 L1229.8,157.9 L1236.4,152.2 L1243.0,146.6 L1249.6,142.9 L1256.2,135.4 L1262.8,137.7 L1269.4,139.0 L1276.0,155.6 L1282.6,141.7 L1289.2,141.6 L1295.8,129.1 L1302.4,132.6 L1309.0,145.5 L1315.6,143.4 L1322.2,138.6 L1328.8,149.0 L1335.4,157.9 L1342.0,145.1 L1348.6,148.2 L1355.2,146.6 L1361.8,143.9 L1368.4,145.8 L1375.0,138.2 L1381.6,139.4 L1388.2,139.9 L1394.8,135.6 L1401.4,141.0 L1408.0,152.2 L1414.6,146.5 L1421.2,154.8 L1427.8,145.6 L1434.4,153.3 L1441.0,147.1 L1447.6,135.1 L1454.2,135.3 L1460.8,146.7 L1467.4,155.5 L1474.0,151.1 L1480.6,138.2 L1487.2,137.3 L1493.8,153.1 L1500.4,140.2 L1507.0,140.1 L1513.6,136.5 L1520.2,130.3 L1526.8,145.2 L1533.4,139.6 L1540.0,140.7 L1546.6,134.1 L1553.2,142.4 L1559.8,153.9 L1566.4,145.7 L1573.0,136.6 L1579.6,143.0 L1586.2,145.1 L1592.8,142.7 L1599.4,144.2 L1606.0,146.8 L1612.6,147.8 L1619.2,133.5 L1625.8,143.2 L1632.4,141.8 L1639.0,133.8 L1645.6,131.5 L1652.2,151.9 L1658.8,152.2 L1665.4,156.0 L1672.0,148.7 L1678.6,157.9 L1685.2,157.9 L1691.8,149.5 L1698.4,142.8 L1705.0,152.1 L1711.6,144.5 L1718.2,133.8 L1724.8,147.3 L1731.4,134.8 L1738.0,140.7 L1744.6,157.9 L1751.2,147.3 L1757.8,143.8 L1764.4,132.2 L1771.0,144.8 L1777.6,129.7 L1784.2,138.9 L1790.8,137.6 L1797.4,142.7 L1804.0,139.0 L1810.6,132.1 L1817.2,139.3 L1823.8,145.9 L1830.4,139.0 L1837.0,143.7 L1843.6,141.2 L1850.2,134.7 L1856.8,139.0 L1863.4,138.9 L1870.0,140.1 L1876.6,141.4 L1883.2,135.9 L1889.8,131.3 L1896.4,136.7 L1903.0,154.3 L1909.6,157.9 L1916.2,142.1 L1922.8,131.4 L1929.4,129.1 L1936.0,141.8 L1942.6,140.8 L1949.2,146.3 L1955.8,141.1 L1962.4,143.0 L1969.0,150.8 L1975.6,141.0 L1982.2,142.1 L1988.8,129.1 L1995.4,129.2 L2002.0,150.0 L2008.6,138.6 L2015.2,148.5 L2021.8,149.7 L2028.4,146.8 L2035.0,154.4 L2041.6,129.1 L2048.2,131.7 L2054.8,146.0 L2061.4,135.2 L2068.0,157.8 L2074.6,138.6 L2081.2,140.5 L2087.8,140.1 L2094.4,134.7 L2101.0,138.4 L2107.6,136.8 L2114.2,148.1 L2120.8,141.2 L2127.4,144.5 L2134.0,139.2 L2140.6,143.0 L2147.2,139.5 L2153.8,145.5 L2160.4,153.5 L2167.0,152.3 L2173.6,138.7 L2180.2,143.3 L2186.8,142.0 L2193.4,145.1 L2200.0,136.5 L2206.6,146.6 L2213.2,157.9 L2219.8,153.3 L2226.4,151.1 L2233.0,136.3 L2239.6,146.6 L2246.2,148.0 L2252.8,140.1 L2259.4,135.8 L2266.0,143.0 L2272.6,132.9 L2279.2,142.5 L2285.8,141.4 L2292.4,149.3 L2299.0,157.9 L2305.6,153.4 L2312.2,151.3 L2318.8,152.7 L2325.4,129.1 L2332.0,150.2 L2338.6,141.6 L2345.2,130.1 L2351.8,132.4 L2358.4,134.9 L2365.0,144.2" fill="none" stroke="#a48ba0" stroke-width="1.25" stroke-linejoin="miter"/>
<line x1="497.2" y1="75" x2="497.2" y2="830" stroke="#8f9aa0" stroke-width="1.6"/>
<line x1="497" y1="829.8" x2="2366" y2="829.8" stroke="#ccd6eb" stroke-width="1.5"/>
<line x1="497.2" y1="830" x2="497.2" y2="836" stroke="#ccd6eb" stroke-width="1.5"/>
<line x1="596.1" y1="830" x2="596.1" y2="836" stroke="#ccd6eb" stroke-width="1.5"/>
<line x1="695.1" y1="830" x2="695.1" y2="836" stroke="#ccd6eb" stroke-width="1.5"/>
<line x1="794.0" y1="830" x2="794.0" y2="836" stroke="#ccd6eb" stroke-width="1.5"/>
<line x1="893.0" y1="830" x2="893.0" y2="836" stroke="#ccd6eb" stroke-width="1.5"/>
<line x1="992.0" y1="830" x2="992.0" y2="836" stroke="#ccd6eb" stroke-width="1.5"/>
<line x1="1090.9" y1="830" x2="1090.9" y2="836" stroke="#ccd6eb" stroke-width="1.5"/>
<line x1="1189.8" y1="830" x2="1189.8" y2="836" stroke="#ccd6eb" stroke-width="1.5"/>
<line x1="1288.8" y1="830" x2="1288.8" y2="836" stroke="#ccd6eb" stroke-width="1.5"/>
<line x1="1387.8" y1="830" x2="1387.8" y2="836" stroke="#ccd6eb" stroke-width="1.5"/>
<line x1="1486.7" y1="830" x2="1486.7" y2="836" stroke="#ccd6eb" stroke-width="1.5"/>
<line x1="1585.7" y1="830" x2="1585.7" y2="836" stroke="#ccd6eb" stroke-width="1.5"/>
<line x1="1684.6" y1="830" x2="1684.6" y2="836" stroke="#ccd6eb" stroke-width="1.5"/>
<line x1="1783.6" y1="830" x2="1783.6" y2="836" stroke="#ccd6eb" stroke-width="1.5"/>
<line x1="1882.5" y1="830" x2="1882.5" y2="836" stroke="#ccd6eb" stroke-width="1.5"/>
<line x1="1981.5" y1="830" x2="1981.5" y2="836" stroke="#ccd6eb" stroke-width="1.5"/>
<line x1="2080.4" y1="830" x2="2080.4" y2="836" stroke="#ccd6eb" stroke-width="1.5"/>
<line x1="2179.3" y1="830" x2="2179.3" y2="836" stroke="#ccd6eb" stroke-width="1.5"/>
<line x1="2278.3" y1="830" x2="2278.3" y2="836" stroke="#ccd6eb" stroke-width="1.5"/></svg>
<div style="position:absolute;left:423.3px;top:442px;width:60px;height:19px;line-height:19px;text-align:center;font-size:15.5px;letter-spacing:1.8px;text-indent:1.8px;color:#7b8990;transform:rotate(-90deg);transform-origin:50% 50%">g/L</div>
<svg style="position:absolute;left:449px;top:865px;" width="13" height="18" viewBox="0 0 13 18"><path d="M6.5 0v13" stroke="#007960" stroke-width="3"/><path d="M0 11l6.5 7 6.5-7z" fill="#007960"/></svg>
<svg style="position:absolute;left:1265px;top:865px;" width="20" height="18" viewBox="0 0 20 18"><path d="M10 0v18L0 9zM20 0v18L10 9z" fill="#007960"/></svg>
<svg style="position:absolute;left:1302px;top:865px;" width="11" height="18" viewBox="0 0 11 18"><path d="M11 0v18L0 9z" fill="#007960"/></svg>
<svg style="position:absolute;left:1387px;top:865px;" width="11" height="18" viewBox="0 0 11 18"><path d="M0 0v18l11-9z" fill="#007960"/></svg>
<svg style="position:absolute;left:1415px;top:865px;" width="19" height="18" viewBox="0 0 19 18"><path d="M0 0v18l9.5-9zM9.5 0v18l9.5-9z" fill="#007960"/></svg>
<svg style="position:absolute;left:1451px;top:865px;" width="13" height="18" viewBox="0 0 13 18"><path d="M0 0v18l9-9z" fill="#007960"/><rect x="9.5" y="0" width="3" height="18" fill="#007960"/></svg>
<svg style="position:absolute;left:1481px;top:867px;" width="15" height="16" viewBox="0 0 15 16"><path d="M2.5 7a5.5 5.5 0 0 1 9.8-2.8M12.5 9a5.5 5.5 0 0 1-9.8 2.8" fill="none" stroke="#007960" stroke-width="2.6"/><path d="M14.5 0.5v5.5H9zM0.5 15.5V10H6z" fill="#007960"/></svg>
<div style="position:absolute;left:439px;top:890px;width:1944px;height:81px;background:#f5f5f5;border-top:1px solid #e4e4e4;box-sizing:border-box"></div>
<div style="position:absolute;left:2022px;top:904px;width:314px;height:15px;background:#efefef;border:2px solid #cacaca;border-radius:0 6px 6px 0;box-sizing:border-box"></div>
<div style="position:absolute;left:466px;top:903px;width:1558px;height:16.5px;background:#fff;border:2.6px solid #007960;border-left:none;border-right:none;box-sizing:border-box"></div>
<div style="position:absolute;left:464.5px;top:900px;width:6.5px;height:22.5px;background:#fff;border:2.2px solid #007960;box-sizing:border-box"></div>
<div style="position:absolute;left:2020.5px;top:900px;width:6.5px;height:22.5px;background:#fff;border:2.2px solid #007960;box-sizing:border-box"></div>
<svg style="position:absolute;left:2348px;top:904px;" width="15" height="18" viewBox="0 0 14 16"><rect x="0" y="0" width="13.6" height="16" rx="1" fill="#0a6f5a"/><path d="M0.3 8.8 L3.4 1.3 L6.8 15.2 M6.8 15.2 L10.2 1.3 L13.4 8.8" fill="none" stroke="#fff" stroke-width="1.3"/><path d="M6.8 0v16" stroke="#fff" stroke-width="0.9"/></svg>
<svg style="position:absolute;left:0;top:0" width="2383" height="1160"><line x1="493.0" y1="919" x2="493.0" y2="924" stroke="#ccd6eb" stroke-width="1.2"/><line x1="599.7" y1="919" x2="599.7" y2="924" stroke="#ccd6eb" stroke-width="1.2"/><line x1="706.4" y1="919" x2="706.4" y2="924" stroke="#ccd6eb" stroke-width="1.2"/><line x1="813.1" y1="919" x2="813.1" y2="924" stroke="#ccd6eb" stroke-width="1.2"/><line x1="919.8" y1="919" x2="919.8" y2="924" stroke="#ccd6eb" stroke-width="1.2"/><line x1="1026.5" y1="919" x2="1026.5" y2="924" stroke="#ccd6eb" stroke-width="1.2"/><line x1="1133.2" y1="919" x2="1133.2" y2="924" stroke="#ccd6eb" stroke-width="1.2"/><line x1="1239.9" y1="919" x2="1239.9" y2="924" stroke="#ccd6eb" stroke-width="1.2"/><line x1="1346.6" y1="919" x2="1346.6" y2="924" stroke="#ccd6eb" stroke-width="1.2"/><line x1="1453.3" y1="919" x2="1453.3" y2="924" stroke="#ccd6eb" stroke-width="1.2"/><line x1="1560.0" y1="919" x2="1560.0" y2="924" stroke="#ccd6eb" stroke-width="1.2"/><line x1="1666.7" y1="919" x2="1666.7" y2="924" stroke="#ccd6eb" stroke-width="1.2"/><line x1="1773.4" y1="919" x2="1773.4" y2="924" stroke="#ccd6eb" stroke-width="1.2"/><line x1="1880.1" y1="919" x2="1880.1" y2="924" stroke="#ccd6eb" stroke-width="1.2"/><line x1="1986.8" y1="919" x2="1986.8" y2="924" stroke="#ccd6eb" stroke-width="1.2"/><line x1="2093.5" y1="919" x2="2093.5" y2="924" stroke="#ccd6eb" stroke-width="1.2"/><line x1="2200.2" y1="919" x2="2200.2" y2="924" stroke="#ccd6eb" stroke-width="1.2"/><line x1="2306.9" y1="919" x2="2306.9" y2="924" stroke="#ccd6eb" stroke-width="1.2"/></svg>
<svg style="position:absolute;left:449px;top:946px;" width="13" height="17" viewBox="0 0 13 17"><path d="M6.5 5v12" stroke="#007960" stroke-width="3"/><path d="M0 7l6.5-7 6.5 7z" fill="#007960"/></svg>
<div style="position:absolute;left:439px;top:971px;width:1944px;height:189px;background:#f5f5f5"></div>
<div style="position:absolute;left:439px;top:971px;width:1500px;height:33px;background:#007960"></div>
<svg style="position:absolute;left:451px;top:980px;" width="19" height="14" viewBox="0 0 19 14"><path d="M0 0v14h19v-1.5H1.5V0z" fill="#fff"/><path d="M2.5 12V6.5l4-4 4 4.5 3-3 4.5 5V12z" fill="#fff"/></svg>
<div style="position:absolute;left:1829px;top:974.4px;width:104px;height:26.2px;background:#fff;border-radius:4px"></div>
<svg style="position:absolute;left:1834px;top:978px;" width="20" height="18" viewBox="0 0 20 18"><path fill-rule="evenodd" fill="#2a2a2a" d="M12.39,8.14 L14.05,8.35 L14.05,9.85 L12.39,10.06 L11.82,11.46 L12.84,12.78 L11.78,13.84 L10.46,12.82 L9.06,13.39 L8.85,15.05 L7.35,15.05 L7.14,13.39 L5.74,12.82 L4.42,13.84 L3.36,12.78 L4.38,11.46 L3.81,10.06 L2.15,9.85 L2.15,8.35 L3.81,8.14 L4.38,6.74 L3.36,5.42 L4.42,4.36 L5.74,5.38 L7.14,4.81 L7.35,3.15 L8.85,3.15 L9.06,4.81 L10.46,5.38 L11.78,4.36 L12.84,5.42 L11.82,6.74Z M5.80,9.10 a2.30,2.30 0 1,0 4.60,0 a2.30,2.30 0 1,0 -4.60,0Z M18.49,3.78 L19.65,3.90 L19.65,5.10 L18.49,5.22 L17.92,6.21 L18.39,7.27 L17.35,7.87 L16.67,6.93 L15.53,6.93 L14.85,7.87 L13.81,7.27 L14.28,6.21 L13.71,5.22 L12.55,5.10 L12.55,3.90 L13.71,3.78 L14.28,2.79 L13.81,1.73 L14.85,1.13 L15.53,2.07 L16.67,2.07 L17.35,1.13 L18.39,1.73 L17.92,2.79Z M15.00,4.50 a1.10,1.10 0 1,0 2.20,0 a1.10,1.10 0 1,0 -2.20,0Z M18.69,13.28 L19.85,13.40 L19.85,14.60 L18.69,14.72 L18.12,15.71 L18.59,16.77 L17.55,17.37 L16.87,16.43 L15.73,16.43 L15.05,17.37 L14.01,16.77 L14.48,15.71 L13.91,14.72 L12.75,14.60 L12.75,13.40 L13.91,13.28 L14.48,12.29 L14.01,11.23 L15.05,10.63 L15.73,11.57 L16.87,11.57 L17.55,10.63 L18.59,11.23 L18.12,12.29Z M15.20,14.00 a1.10,1.10 0 1,0 2.20,0 a1.10,1.10 0 1,0 -2.20,0Z"/></svg>
<div style="position:absolute;left:439px;top:1004px;width:1500px;height:156px;background:#fff"></div>
<div style="position:absolute;left:439px;top:1036px;width:1489px;height:3px;background:#dee2e6"></div>
<svg style="position:absolute;left:530px;top:1018px;" width="11" height="11" viewBox="0 0 11 11"><path d="M1.5 1.5l8 8M9.5 1.5l-8 8" stroke="#007960" stroke-width="2.8"/></svg>
<svg style="position:absolute;left:555px;top:1015px;" width="14" height="14" viewBox="0 0 14 14"><rect x="0.5" y="0.5" width="13" height="13" rx="2" fill="#333"/><path d="M3 7l2.8 2.8L11 4.3" fill="none" stroke="#fff" stroke-width="2"/></svg>
<svg style="position:absolute;left:615px;top:1017px;" width="10" height="11" viewBox="0 0 10 11"><path d="M0 4.5L4.5 0 9 4.5zM0 6.5L4.5 11 9 6.5z" fill="#777"/></svg>
<svg style="position:absolute;left:687px;top:1017px;" width="10" height="11" viewBox="0 0 10 11"><path d="M0 4.5L4.5 0 9 4.5zM0 6.5L4.5 11 9 6.5z" fill="#777"/></svg>
<svg style="position:absolute;left:1808px;top:1016px;" width="10" height="6" viewBox="0 0 10 6"><path d="M0 5.5L5 0l5 5.5z" fill="#007960"/></svg>
<svg style="position:absolute;left:1896px;top:1009px;" width="22" height="20" viewBox="0 0 22 20"><rect x="0.5" y="1" width="18.5" height="14.5" rx="0.8" fill="#fff" stroke="#555" stroke-width="0.8"/><rect x="9.8" y="1.4" width="8.8" height="13.7" fill="#d8d8d8"/><path d="M0.5 5.8h9.3M0.5 10.6h9.3M9.8 1v14.5" stroke="#555" stroke-width="0.8"/><circle cx="17.3" cy="15.2" r="3.4" fill="#333"/><path d="M17.3 13.2v4M15.3 15.2h4" stroke="#fff" stroke-width="1.1"/></svg>
<div style="position:absolute;left:1928.5px;top:1005px;width:10px;height:170px;background:#d4d4d4;border-radius:6px"></div>
<div style="position:absolute;left:439px;top:1039px;width:1489px;height:29px;background:#fcf6e4;border-bottom:1px solid #dee2e6;box-sizing:border-box"></div>
<svg style="position:absolute;left:444px;top:1046.5px;" width="15" height="14" viewBox="0 0 15 14"><path d="M11 0.5l3 3L5 12.5l-4 1.2L2 9.5z" fill="#007960"/><path d="M2.5 10.5l2.5 2.5" stroke="#fff" stroke-width=".9"/><path d="M9.5 2l3 3" stroke="#fff" stroke-width=".9"/></svg>
<svg style="position:absolute;left:475px;top:1046.5px;" width="15" height="15" viewBox="0 0 15 15"><path d="M14 0C9.5 0.5 6.5 3 4.5 6.5L2 7 0 10l3.3.3L4.5 11.5l.3 3.3L8 12.8l.5-2.5C12 8.3 14 5 14 0z" fill="#007960"/><circle cx="10" cy="4.5" r="1.3" fill="#fff"/></svg>
<svg style="position:absolute;left:505px;top:1046.5px;" width="14" height="14" viewBox="0 0 14 14"><circle cx="7" cy="7" r="7" fill="#007960"/><circle cx="7" cy="3.6" r="1.3" fill="#fff"/><path d="M5 6h3v4.5h1.3V12H4.7v-1.5H6V7.5H5z" fill="#fff"/></svg>
<svg style="position:absolute;left:530px;top:1048.0px;" width="11" height="11" viewBox="0 0 11 11"><path d="M1.5 1.5l8 8M9.5 1.5l-8 8" stroke="#007960" stroke-width="2.8"/></svg>
<svg style="position:absolute;left:555px;top:1046.5px;" width="14" height="14" viewBox="0 0 14 14"><rect x="0.5" y="0.5" width="13" height="13" rx="2" fill="#333"/><path d="M3 7l2.8 2.8L11 4.3" fill="none" stroke="#fff" stroke-width="2"/></svg>
<svg style="position:absolute;left:580px;top:1042.5px;" width="19" height="17" viewBox="0 0 19 17"><path d="M1 10.5 L3.8 1.2 L7.2 11.6 L10.3 4.6 L13.4 15.4 L16.4 9.5 L17.3 12.5" fill="none" stroke="#a48ba0" stroke-width="1.9" stroke-linejoin="round" stroke-linecap="round"/></svg>
<div style="position:absolute;left:439px;top:1068px;width:1489px;height:29.700000000000045px;background:#fff;border-bottom:1px solid #dee2e6;box-sizing:border-box"></div>
<svg style="position:absolute;left:444px;top:1075.85px;" width="15" height="14" viewBox="0 0 15 14"><path d="M11 0.5l3 3L5 12.5l-4 1.2L2 9.5z" fill="#007960"/><path d="M2.5 10.5l2.5 2.5" stroke="#fff" stroke-width=".9"/><path d="M9.5 2l3 3" stroke="#fff" stroke-width=".9"/></svg>
<svg style="position:absolute;left:475px;top:1075.85px;" width="15" height="15" viewBox="0 0 15 15"><path d="M14 0C9.5 0.5 6.5 3 4.5 6.5L2 7 0 10l3.3.3L4.5 11.5l.3 3.3L8 12.8l.5-2.5C12 8.3 14 5 14 0z" fill="#007960"/><circle cx="10" cy="4.5" r="1.3" fill="#fff"/></svg>
<svg style="position:absolute;left:505px;top:1075.85px;" width="14" height="14" viewBox="0 0 14 14"><circle cx="7" cy="7" r="7" fill="#007960"/><circle cx="7" cy="3.6" r="1.3" fill="#fff"/><path d="M5 6h3v4.5h1.3V12H4.7v-1.5H6V7.5H5z" fill="#fff"/></svg>
<svg style="position:absolute;left:530px;top:1077.35px;" width="11" height="11" viewBox="0 0 11 11"><path d="M1.5 1.5l8 8M9.5 1.5l-8 8" stroke="#007960" stroke-width="2.8"/></svg>
<svg style="position:absolute;left:555px;top:1075.85px;" width="14" height="14" viewBox="0 0 14 14"><rect x="1" y="1" width="12" height="12" rx="2" fill="#fff" stroke="#444" stroke-width="1.3"/></svg>
<svg style="position:absolute;left:580px;top:1071.85px;" width="19" height="17" viewBox="0 0 19 17"><path d="M1 10.5 L3.8 1.2 L7.2 11.6 L10.3 4.6 L13.4 15.4 L16.4 9.5 L17.3 12.5" fill="none" stroke="#2a9be0" stroke-width="1.9" stroke-linejoin="round" stroke-linecap="round"/></svg>
<div style="position:absolute;left:439px;top:1097.7px;width:1489px;height:29.299999999999955px;background:#f9f9f9;border-bottom:1px solid #dee2e6;box-sizing:border-box"></div>
<svg style="position:absolute;left:444px;top:1105.35px;" width="15" height="14" viewBox="0 0 15 14"><path d="M11 0.5l3 3L5 12.5l-4 1.2L2 9.5z" fill="#007960"/><path d="M2.5 10.5l2.5 2.5" stroke="#fff" stroke-width=".9"/><path d="M9.5 2l3 3" stroke="#fff" stroke-width=".9"/></svg>
<svg style="position:absolute;left:475px;top:1105.35px;" width="15" height="15" viewBox="0 0 15 15"><path d="M14 0C9.5 0.5 6.5 3 4.5 6.5L2 7 0 10l3.3.3L4.5 11.5l.3 3.3L8 12.8l.5-2.5C12 8.3 14 5 14 0z" fill="#007960"/><circle cx="10" cy="4.5" r="1.3" fill="#fff"/></svg>
<svg style="position:absolute;left:505px;top:1105.35px;" width="14" height="14" viewBox="0 0 14 14"><circle cx="7" cy="7" r="7" fill="#007960"/><circle cx="7" cy="3.6" r="1.3" fill="#fff"/><path d="M5 6h3v4.5h1.3V12H4.7v-1.5H6V7.5H5z" fill="#fff"/></svg>
<svg style="position:absolute;left:530px;top:1106.85px;" width="11" height="11" viewBox="0 0 11 11"><path d="M1.5 1.5l8 8M9.5 1.5l-8 8" stroke="#007960" stroke-width="2.8"/></svg>
<svg style="position:absolute;left:555px;top:1105.35px;" width="14" height="14" viewBox="0 0 14 14"><rect x="1" y="1" width="12" height="12" rx="2" fill="#fff" stroke="#444" stroke-width="1.3"/></svg>
<svg style="position:absolute;left:580px;top:1101.35px;" width="19" height="17" viewBox="0 0 19 17"><path d="M1 10.5 L3.8 1.2 L7.2 11.6 L10.3 4.6 L13.4 15.4 L16.4 9.5 L17.3 12.5" fill="none" stroke="#d2541f" stroke-width="1.9" stroke-linejoin="round" stroke-linecap="round"/></svg>
<div style="position:absolute;left:439px;top:1127px;width:1489px;height:29px;background:#fff;border-bottom:1px solid #dee2e6;box-sizing:border-box"></div>
<svg style="position:absolute;left:444px;top:1134.5px;" width="15" height="14" viewBox="0 0 15 14"><path d="M11 0.5l3 3L5 12.5l-4 1.2L2 9.5z" fill="#007960"/><path d="M2.5 10.5l2.5 2.5" stroke="#fff" stroke-width=".9"/><path d="M9.5 2l3 3" stroke="#fff" stroke-width=".9"/></svg>
<svg style="position:absolute;left:475px;top:1134.5px;" width="15" height="15" viewBox="0 0 15 15"><path d="M14 0C9.5 0.5 6.5 3 4.5 6.5L2 7 0 10l3.3.3L4.5 11.5l.3 3.3L8 12.8l.5-2.5C12 8.3 14 5 14 0z" fill="#007960"/><circle cx="10" cy="4.5" r="1.3" fill="#fff"/></svg>
<svg style="position:absolute;left:505px;top:1134.5px;" width="14" height="14" viewBox="0 0 14 14"><circle cx="7" cy="7" r="7" fill="#007960"/><circle cx="7" cy="3.6" r="1.3" fill="#fff"/><path d="M5 6h3v4.5h1.3V12H4.7v-1.5H6V7.5H5z" fill="#fff"/></svg>
<svg style="position:absolute;left:530px;top:1136.0px;" width="11" height="11" viewBox="0 0 11 11"><path d="M1.5 1.5l8 8M9.5 1.5l-8 8" stroke="#007960" stroke-width="2.8"/></svg>
<svg style="position:absolute;left:555px;top:1134.5px;" width="14" height="14" viewBox="0 0 14 14"><rect x="1" y="1" width="12" height="12" rx="2" fill="#fff" stroke="#444" stroke-width="1.3"/></svg>
<svg style="position:absolute;left:580px;top:1130.5px;" width="19" height="17" viewBox="0 0 19 17"><path d="M1 10.5 L3.8 1.2 L7.2 11.6 L10.3 4.6 L13.4 15.4 L16.4 9.5 L17.3 12.5" fill="none" stroke="#a86a3d" stroke-width="1.9" stroke-linejoin="round" stroke-linecap="round"/></svg>
<div style="position:absolute;left:439px;top:1156px;width:1489px;height:4px;background:#dee2e6"></div>
<div style="position:absolute;left:439px;top:1159px;width:1489px;height:1px;background:#fcf6e4"></div>
<svg style="position:absolute;left:1941px;top:1083px;" width="5" height="10" viewBox="0 0 5 10"><path d="M1 0v10M4 0v10" stroke="#999" stroke-width="1.2"/></svg>
<div style="position:absolute;left:1949px;top:971px;width:434px;height:33px;background:#007960"></div>
<svg style="position:absolute;left:1964px;top:976px;" width="14" height="19" viewBox="0 0 14 19"><path d="M3 1H1v17h2M11 1h2v17h-2" fill="none" stroke="#fff" stroke-width="1.6"/><path d="M3.5 14L5 4l2 8 2-8 1.5 10" fill="none" stroke="#fff" stroke-width="1.5"/></svg>
<div style="position:absolute;left:2323.2px;top:974.2px;width:54.6px;height:26.4px;background:#fff;border-radius:4px"></div>
<div style="position:absolute;left:2351px;top:975px;width:1px;height:25px;background:#ddd"></div>
<svg style="position:absolute;left:2331px;top:980px;" width="15" height="15" viewBox="0 0 15 15"><circle cx="6" cy="6" r="4.8" fill="none" stroke="#222" stroke-width="2"/><path d="M9.5 9.5l4.5 4.5" stroke="#222" stroke-width="2.5"/><path d="M6 3.6v4.8M3.6 6h4.8" stroke="#222" stroke-width="1.5"/></svg>
<svg style="position:absolute;left:2358px;top:980px;" width="13" height="13" viewBox="0 0 13 13"><rect x="0.8" y="0.8" width="11.4" height="11.4" rx="2" fill="none" stroke="#333" stroke-width="1.4"/><path d="M3.5 6.5h6" stroke="#333" stroke-width="1.6"/></svg>
<div style="position:absolute;left:1949px;top:1004px;width:434px;height:156px;background:#fff;border-left:1px solid #e0e0e0;box-sizing:border-box"></div>
<div style="position:absolute;left:1949px;top:1042px;width:425px;height:3px;background:#dee2e6"></div>
<svg style="position:absolute;left:1957px;top:1021px;" width="13" height="13" viewBox="0 0 13 13"><rect x="0.8" y="0.8" width="11.4" height="11.4" rx="2" fill="#fff" stroke="#444" stroke-width="1.3"/></svg>
<svg style="position:absolute;left:2052px;top:1023px;" width="10" height="11" viewBox="0 0 10 11"><path d="M0 4.5L4.5 0 9 4.5zM0 6.5L4.5 11 9 6.5z" fill="#777"/></svg>
<svg style="position:absolute;left:2236px;top:1021px;" width="10" height="6" viewBox="0 0 10 6"><path d="M0 5.5L5 0l5 5.5z" fill="#007960"/></svg>
<svg style="position:absolute;left:2266px;top:1013px;" width="22" height="20" viewBox="0 0 22 20"><rect x="0.5" y="1" width="18.5" height="14.5" rx="0.8" fill="#fff" stroke="#555" stroke-width="0.8"/><rect x="9.8" y="1.4" width="8.8" height="13.7" fill="#d8d8d8"/><path d="M0.5 5.8h9.3M0.5 10.6h9.3M9.8 1v14.5" stroke="#555" stroke-width="0.8"/><circle cx="17.3" cy="15.2" r="3.4" fill="#333"/><path d="M17.3 13.2v4M15.3 15.2h4" stroke="#fff" stroke-width="1.1"/></svg>
<div style="position:absolute;left:2294px;top:1008px;width:1px;height:30px;background:#ddd"></div>
<svg style="position:absolute;left:2318px;top:1013px;" width="22" height="20" viewBox="0 0 22 20"><rect x="0.5" y="1" width="18.5" height="14.5" rx="0.8" fill="#fff" stroke="#a48ba0" stroke-width="0.8"/><rect x="9.8" y="1.4" width="8.8" height="13.7" fill="#d8d8d8"/><path d="M0.5 5.8h9.3M0.5 10.6h9.3M9.8 1v14.5" stroke="#a48ba0" stroke-width="0.8"/><circle cx="17.3" cy="15.2" r="3.4" fill="#a48ba0"/><path d="M17.3 13.2v4M15.3 15.2h4" stroke="#fff" stroke-width="1.1"/></svg>
<svg style="position:absolute;left:2361px;top:1013px;" width="13" height="20" viewBox="0 0 13 20"><rect x="0.5" y="1" width="18.5" height="14.5" rx="0.8" fill="#fff" stroke="#6aa7e8" stroke-width="0.8"/><rect x="9.8" y="1.4" width="8.8" height="13.7" fill="#d8d8d8"/><path d="M0.5 5.8h9.3M0.5 10.6h9.3M9.8 1v14.5" stroke="#6aa7e8" stroke-width="0.8"/><circle cx="17.3" cy="15.2" r="3.4" fill="#6aa7e8"/><path d="M17.3 13.2v4M15.3 15.2h4" stroke="#fff" stroke-width="1.1"/></svg>
<div style="position:absolute;left:2373.6px;top:1005px;width:9.4px;height:113px;background:#d4d4d4;border-radius:6px"></div>
<div style="position:absolute;left:1949px;top:1045px;width:425px;height:28px;background:#f9f9f9;border-bottom:1px solid #dee2e6;border-left:1px solid #e0e0e0;box-sizing:border-box"></div>
<svg style="position:absolute;left:1957px;top:1052.5px;" width="13" height="13" viewBox="0 0 13 13"><rect x="0.8" y="0.8" width="11.4" height="11.4" rx="2" fill="#fff" stroke="#444" stroke-width="1.3"/></svg>
<svg style="position:absolute;left:1988px;top:1049.5px;" width="13" height="18" viewBox="0 0 13 18"><path d="M3 1H1v16h2M10 1h2v16h-2" fill="none" stroke="#0f8a4b" stroke-width="1.6"/><path d="M3.5 12L5 3.5l1.5 7 1.5-7L9.5 12" fill="none" stroke="#0f8a4b" stroke-width="1.3"/></svg>
<div style="position:absolute;left:1949px;top:1073px;width:425px;height:29.200000000000045px;background:#fff;border-bottom:1px solid #dee2e6;border-left:1px solid #e0e0e0;box-sizing:border-box"></div>
<svg style="position:absolute;left:1957px;top:1081.1px;" width="13" height="13" viewBox="0 0 13 13"><rect x="0.8" y="0.8" width="11.4" height="11.4" rx="2" fill="#fff" stroke="#444" stroke-width="1.3"/></svg>
<svg style="position:absolute;left:1988px;top:1078.1px;" width="13" height="18" viewBox="0 0 13 18"><path d="M3 1H1v16h2M10 1h2v16h-2" fill="none" stroke="#0f8a4b" stroke-width="1.6"/><path d="M3.5 12L5 3.5l1.5 7 1.5-7L9.5 12" fill="none" stroke="#0f8a4b" stroke-width="1.3"/></svg>
<div style="position:absolute;left:1949px;top:1102.2px;width:425px;height:29.799999999999955px;background:#f9f9f9;border-bottom:1px solid #dee2e6;border-left:1px solid #e0e0e0;box-sizing:border-box"></div>
<svg style="position:absolute;left:1957px;top:1110.6px;" width="13" height="13" viewBox="0 0 13 13"><rect x="0.8" y="0.8" width="11.4" height="11.4" rx="2" fill="#fff" stroke="#444" stroke-width="1.3"/></svg>
<svg style="position:absolute;left:1988px;top:1107.6px;" width="13" height="18" viewBox="0 0 13 18"><path d="M3 1H1v16h2M10 1h2v16h-2" fill="none" stroke="#0f8a4b" stroke-width="1.6"/><path d="M3.5 12L5 3.5l1.5 7 1.5-7L9.5 12" fill="none" stroke="#0f8a4b" stroke-width="1.3"/></svg>
<div style="position:absolute;left:1949px;top:1132px;width:425px;height:29px;background:#fff;border-bottom:1px solid #dee2e6;border-left:1px solid #e0e0e0;box-sizing:border-box"></div>
<svg style="position:absolute;left:1957px;top:1140.0px;" width="13" height="13" viewBox="0 0 13 13"><rect x="0.8" y="0.8" width="11.4" height="11.4" rx="2" fill="#fff" stroke="#444" stroke-width="1.3"/></svg>
<svg style="position:absolute;left:1988px;top:1137.0px;" width="13" height="18" viewBox="0 0 13 18"><path d="M3 1H1v16h2M10 1h2v16h-2" fill="none" stroke="#0f8a4b" stroke-width="1.6"/><path d="M3.5 12L5 3.5l1.5 7 1.5-7L9.5 12" fill="none" stroke="#0f8a4b" stroke-width="1.3"/></svg>
<svg style="position:absolute;left:1941px;top:1083px;" width="5" height="10" viewBox="0 0 5 10"><path d="M1 0v10M4 0v10" stroke="#999" stroke-width="1.2"/></svg>
<div class="t" style="left:56.0px;top:14.4px;font-size:15px;color:#111;transform:scaleX(0.9310);">Data</div>
<div class="t" style="left:195.0px;top:14.4px;font-size:15px;color:#111;transform:scaleX(1.0134);">Tools</div>
<div class="t" style="left:329.0px;top:14.4px;font-size:15px;color:#111;transform:scaleX(1.0568);">Journal</div>
<div class="t" style="left:33.0px;top:61.9px;font-size:14.5px;color:#007960;transform:scaleX(1.0424);">Overview</div>
<div class="t" style="left:103.0px;top:65.8px;font-size:13.5px;color:#007960;transform:scaleX(0.9314);">»</div>
<div class="t" style="left:114.0px;top:61.9px;font-size:14.5px;color:#007960;transform:scaleX(1.0356);">Model &amp; Predict</div>
<div class="t" style="left:226.0px;top:65.8px;font-size:13.5px;color:#007960;transform:scaleX(0.9314);">»</div>
<div class="t" style="left:238.0px;top:61.9px;font-size:14.5px;color:#555;transform:scaleX(1.0176);">Reference Profile</div>
<div class="t" style="left:427.2px;top:593.1px;font-size:17px;color:#333;">«</div>
<div class="t" style="left:117.0px;top:113.8px;font-size:15px;color:#212121;font-weight:700;">Solution Concentration</div>
<div class="t" style="left:293.0px;top:113.8px;font-size:15px;color:#333;transform:scaleX(1.0277);">(g/</div>
<div class="t" style="left:117.0px;top:136.1px;font-size:15px;color:#333;transform:scaleX(1.0492);">L)</div>
<div class="t" style="left:117.0px;top:154.0px;font-size:12.2px;color:#555;transform:scaleX(1.0076);">Sample Assets » Batch Products » P</div>
<div class="t" style="left:117.0px;top:166.9px;font-size:12.2px;color:#555;">roduct 1 » Site 1 » Reactor 2</div>
<div class="t" style="left:83.0px;top:197.3px;font-size:15px;color:#333;transform:scaleX(1.0658);">Input condition</div>
<div class="t" style="left:117.0px;top:230.3px;font-size:15px;color:#212121;font-weight:700;transform:scaleX(0.9715);">Best Reaction Step Rctr</div>
<div class="t" style="left:117.0px;top:252.9px;font-size:15px;color:#212121;font-weight:700;transform:scaleX(1.0787);">2</div>
<div class="t" style="left:83.0px;top:329.3px;font-size:15px;color:#333;transform:scaleX(1.0295);">Input signal</div>
<div class="t" style="left:117.0px;top:362.4px;font-size:15px;color:#212121;font-weight:700;">Solution Concentration</div>
<div class="t" style="left:293.0px;top:362.4px;font-size:15px;color:#333;transform:scaleX(1.0277);">(g/</div>
<div class="t" style="left:117.0px;top:385.4px;font-size:15px;color:#333;transform:scaleX(1.0492);">L)</div>
<div class="t" style="left:117.0px;top:403.3px;font-size:12.2px;color:#555;transform:scaleX(1.0076);">Sample Assets » Batch Products » P</div>
<div class="t" style="left:117.0px;top:414.8px;font-size:12.2px;color:#555;">roduct 1 » Site 1 » Reactor 3</div>
<div class="t" style="left:83.0px;top:446.1px;font-size:15px;color:#333;transform:scaleX(1.0658);">Input condition</div>
<div class="t" style="left:117.0px;top:479.6px;font-size:15px;color:#212121;font-weight:700;transform:scaleX(0.9715);">Best Reaction Step Rctr</div>
<div class="t" style="left:117.0px;top:502.3px;font-size:15px;color:#212121;font-weight:700;transform:scaleX(1.0787);">3</div>
<div class="t" style="left:89.0px;top:577.1px;font-size:15px;color:#007960;transform:scaleX(1.0237);text-decoration:underline">Add Signal/Condition Pair</div>
<div class="t" style="left:69.0px;top:619.5px;font-size:15px;color:#333;transform:scaleX(1.0387);">Training window</div>
<div class="t" style="left:103.0px;top:648.4px;font-size:15px;color:#212121;font-weight:700;transform:scaleX(1.0221);">Date/Time</div>
<div class="t" style="left:243.0px;top:648.4px;font-size:15px;color:#212121;font-weight:700;transform:scaleX(1.0361);">Date/Time</div>
<div class="t" style="left:69.0px;top:678.7px;font-size:14.5px;color:#007960;">2/12/2022 12:47 PM</div>
<div class="t" style="left:207.0px;top:679.8px;font-size:14px;color:#333;transform:scaleX(0.8562);">-</div>
<div class="t" style="left:218.0px;top:678.7px;font-size:14.5px;color:#007960;">2/15/2022 12:47 PM</div>
<div class="t" style="left:69.0px;top:720.4px;font-size:15px;color:#333;transform:scaleX(1.0335);">Gridding period</div>
<div class="t" style="left:113.0px;top:758.4px;font-size:15px;color:#333;transform:scaleX(0.9588);">5</div>
<div class="t" style="left:169.0px;top:758.4px;font-size:15px;color:#333;transform:scaleX(1.0397);">minute(s)</div>
<div class="t" style="left:69.0px;top:808.4px;font-size:15px;color:#333;">Reference statistic</div>
<div class="t" style="left:83.0px;top:846.4px;font-size:15px;color:#333;transform:scaleX(0.9531);">Average</div>
<div class="t" style="left:69.0px;top:908.6px;font-size:15px;color:#333;transform:scaleX(1.0267);">Apply to Condition</div>
<div class="t" style="left:107.0px;top:946.1px;font-size:15px;color:#212121;font-weight:700;transform:scaleX(0.9785);">Reaction</div>
<div class="t" style="left:107.0px;top:962.6px;font-size:12.2px;color:#555;transform:scaleX(1.0134);">Sample Assets » Batch Products » Prod</div>
<div class="t" style="left:107.0px;top:976.2px;font-size:12.2px;color:#555;transform:scaleX(0.9816);">uct 1 » Site 1 » Reactor 1</div>
<div class="t" style="left:111.0px;top:1002.8px;font-size:15px;color:#333;transform:scaleX(1.0209);">Maximum capsule duration</div>
<div class="t" style="left:185.0px;top:1047.4px;font-size:15px;color:#333;transform:scaleX(0.8989);">40</div>
<div class="t" style="left:248.0px;top:1047.4px;font-size:15px;color:#333;transform:scaleX(1.0102);">hour(s)</div>
<div class="t" style="left:111.5px;top:1101.4px;font-size:15px;color:#333;transform:scaleX(0.8993);">Cancel</div>
<div class="t" style="left:258.5px;top:1101.4px;font-size:15px;color:#fff;transform:scaleX(0.8856);">Execute</div>
<div class="t" style="left:531.0px;top:34.6px;font-size:12.6px;color:#444;transform:scaleX(0.9196);">Calendar</div>
<div class="t" style="left:597.0px;top:34.6px;font-size:12.6px;color:#444;transform:scaleX(0.9117);">Chain</div>
<div class="t" style="left:646.0px;top:34.6px;font-size:12.6px;color:#444;transform:scaleX(0.9087);">Capsule</div>
<div class="t" style="left:724.0px;top:34.6px;font-size:12.6px;color:#444;transform:scaleX(0.8856);">One Lane</div>
<div class="t" style="left:792.0px;top:34.6px;font-size:12.6px;color:#444;transform:scaleX(0.8506);">One Y-Axis</div>
<div class="t" style="left:869.0px;top:34.6px;font-size:12.6px;color:#444;transform:scaleX(0.8509);">Reset</div>
<div class="t" style="left:920.0px;top:34.6px;font-size:12.6px;color:#444;transform:scaleX(0.9158);">Labels</div>
<div class="t" style="left:977.0px;top:34.6px;font-size:12.6px;color:#444;transform:scaleX(0.9255);">Gridlines</div>
<div class="t" style="left:1049.0px;top:34.6px;font-size:12.6px;color:#444;transform:scaleX(0.9139);">Group</div>
<div class="t" style="left:1106.0px;top:34.6px;font-size:12.6px;color:#444;transform:scaleX(0.9299);">Color</div>
<div class="t" style="left:1159.0px;top:34.6px;font-size:12.6px;color:#444;transform:scaleX(0.9464);">Summary</div>
<div class="t" style="left:1227.0px;top:34.6px;font-size:12.6px;color:#444;transform:scaleX(0.9660);">Dimming</div>
<div class="t" style="left:1304.0px;top:34.6px;font-size:12.6px;color:#aaa;transform:scaleX(0.9316);">Zoom</div>
<div class="t" style="left:1354.0px;top:34.6px;font-size:12.6px;color:#aaa;transform:scaleX(0.8509);">Reset</div>
<div class="t" style="left:1413.0px;top:34.6px;font-size:12.6px;color:#333;transform:scaleX(0.9064);">Export</div>
<div class="t" style="left:1460.0px;top:34.6px;font-size:12.6px;color:#aaa;transform:scaleX(0.9321);">Annotate</div>
<div class="t" style="left:475.0px;top:798.2px;font-size:14px;color:#7b8990;">−2</div>
<div class="t" style="left:483.2px;top:740.6px;font-size:14px;color:#7b8990;">0</div>
<div class="t" style="left:483.2px;top:683.0px;font-size:14px;color:#7b8990;">2</div>
<div class="t" style="left:483.2px;top:625.4px;font-size:14px;color:#7b8990;">4</div>
<div class="t" style="left:483.2px;top:567.8px;font-size:14px;color:#7b8990;">6</div>
<div class="t" style="left:483.2px;top:510.2px;font-size:14px;color:#7b8990;">8</div>
<div class="t" style="left:475.4px;top:452.6px;font-size:14px;color:#7b8990;">10</div>
<div class="t" style="left:475.4px;top:395.0px;font-size:14px;color:#7b8990;">12</div>
<div class="t" style="left:475.4px;top:337.4px;font-size:14px;color:#7b8990;">14</div>
<div class="t" style="left:475.4px;top:279.8px;font-size:14px;color:#7b8990;">16</div>
<div class="t" style="left:475.4px;top:222.2px;font-size:14px;color:#7b8990;">18</div>
<div class="t" style="left:475.4px;top:164.6px;font-size:14px;color:#7b8990;">20</div>
<div class="t" style="left:475.4px;top:107.0px;font-size:14px;color:#7b8990;">22</div>
<div class="t" style="left:487.6px;top:840.6px;font-size:15px;color:#858d93;">0.0</div>
<div class="t" style="left:578.2px;top:840.6px;font-size:15px;color:#858d93;">00:30</div>
<div class="t" style="left:687.6px;top:840.6px;font-size:15px;color:#858d93;">1h</div>
<div class="t" style="left:780.2px;top:840.6px;font-size:15px;color:#858d93;">1:30</div>
<div class="t" style="left:885.5px;top:840.6px;font-size:15px;color:#858d93;">2h</div>
<div class="t" style="left:978.1px;top:840.6px;font-size:15px;color:#858d93;">2:30</div>
<div class="t" style="left:1083.4px;top:840.6px;font-size:15px;color:#858d93;">3h</div>
<div class="t" style="left:1176.0px;top:840.6px;font-size:15px;color:#858d93;">3:30</div>
<div class="t" style="left:1281.3px;top:840.6px;font-size:15px;color:#858d93;">4h</div>
<div class="t" style="left:1373.9px;top:840.6px;font-size:15px;color:#858d93;">4:30</div>
<div class="t" style="left:1479.2px;top:840.6px;font-size:15px;color:#858d93;">5h</div>
<div class="t" style="left:1571.8px;top:840.6px;font-size:15px;color:#858d93;">5:30</div>
<div class="t" style="left:1677.1px;top:840.6px;font-size:15px;color:#858d93;">6h</div>
<div class="t" style="left:1769.7px;top:840.6px;font-size:15px;color:#858d93;">6:30</div>
<div class="t" style="left:1875.0px;top:840.6px;font-size:15px;color:#858d93;">7h</div>
<div class="t" style="left:1967.6px;top:840.6px;font-size:15px;color:#858d93;">7:30</div>
<div class="t" style="left:2072.9px;top:840.6px;font-size:15px;color:#858d93;">8h</div>
<div class="t" style="left:2165.5px;top:840.6px;font-size:15px;color:#858d93;">8:30</div>
<div class="t" style="left:2270.8px;top:840.6px;font-size:15px;color:#858d93;">9h</div>
<div class="t" style="left:2020.8px;top:77.0px;font-size:15.5px;color:#a48ba0;transform:scaleX(1.0643);text-shadow:1px 1px 1px rgba(0,0,0,.15)">Solution Concentration,</div>
<div class="t" style="left:2197.2px;top:77.0px;font-size:15.5px;color:#12894d;transform:scaleX(1.0210);text-shadow:1px 1px 1px rgba(0,0,0,.15)">Reaction Step Average</div>
<div class="t" style="left:472.0px;top:864.9px;font-size:14.5px;color:#007960;transform:scaleX(0.9139);">2/8/2022 12:47 PM</div>
<div class="t" style="left:592.0px;top:864.9px;font-size:14.5px;color:#007960;transform:scaleX(0.8155);text-decoration:underline">EST</div>
<div class="t" style="left:2214.0px;top:864.5px;font-size:14.5px;color:#007960;transform:scaleX(0.9234);">2/15/2022 12:47 PM</div>
<div class="t" style="left:2342.0px;top:864.5px;font-size:14.5px;color:#007960;transform:scaleX(0.8155);text-decoration:underline">EST</div>
<div class="t" style="left:1330.0px;top:864.9px;font-size:14.5px;color:#007960;transform:scaleX(0.9126);">7 days</div>
<div class="t" style="left:483.0px;top:927.6px;font-size:12px;color:#8f8f8f;transform:scaleX(1.0390);">12:00 pm</div>
<div class="t" style="left:584.2px;top:927.6px;font-size:12px;color:#8f8f8f;transform:scaleX(1.0102);">Feb 9</div>
<div class="t" style="left:680.4px;top:927.6px;font-size:12px;color:#8f8f8f;transform:scaleX(1.0390);">12:00 pm</div>
<div class="t" style="left:794.6px;top:927.6px;font-size:12px;color:#8f8f8f;transform:scaleX(0.9904);">Feb 10</div>
<div class="t" style="left:893.8px;top:927.6px;font-size:12px;color:#8f8f8f;transform:scaleX(1.0390);">12:00 pm</div>
<div class="t" style="left:1008.0px;top:927.6px;font-size:12px;color:#8f8f8f;transform:scaleX(1.0146);">Feb 11</div>
<div class="t" style="left:1107.2px;top:927.6px;font-size:12px;color:#8f8f8f;transform:scaleX(1.0390);">12:00 pm</div>
<div class="t" style="left:1221.4px;top:927.6px;font-size:12px;color:#8f8f8f;transform:scaleX(0.9904);">Feb 12</div>
<div class="t" style="left:1320.6px;top:927.6px;font-size:12px;color:#8f8f8f;transform:scaleX(1.0390);">12:00 pm</div>
<div class="t" style="left:1434.8px;top:927.6px;font-size:12px;color:#8f8f8f;transform:scaleX(0.9904);">Feb 13</div>
<div class="t" style="left:1534.0px;top:927.6px;font-size:12px;color:#8f8f8f;transform:scaleX(1.0390);">12:00 pm</div>
<div class="t" style="left:1648.2px;top:927.6px;font-size:12px;color:#8f8f8f;transform:scaleX(0.9904);">Feb 14</div>
<div class="t" style="left:1747.4px;top:927.6px;font-size:12px;color:#8f8f8f;transform:scaleX(1.0390);">12:00 pm</div>
<div class="t" style="left:1861.6px;top:927.6px;font-size:12px;color:#8f8f8f;transform:scaleX(0.9904);">Feb 15</div>
<div class="t" style="left:1960.8px;top:927.6px;font-size:12px;color:#8f8f8f;transform:scaleX(1.0390);">12:00 pm</div>
<div class="t" style="left:2075.0px;top:927.6px;font-size:12px;color:#8f8f8f;transform:scaleX(0.9904);">Feb 16</div>
<div class="t" style="left:2174.2px;top:927.6px;font-size:12px;color:#8f8f8f;transform:scaleX(1.0390);">12:00 pm</div>
<div class="t" style="left:2288.4px;top:927.6px;font-size:12px;color:#8f8f8f;transform:scaleX(0.9904);">Feb 17</div>
<div class="t" style="left:472.0px;top:949.1px;font-size:14.5px;color:#007960;transform:scaleX(0.9565);">2/8/2022</div>
<div class="t" style="left:1393.6px;top:949.1px;font-size:14.5px;color:#007960;transform:scaleX(0.8390);">8.5 days</div>
<div class="t" style="left:2299.0px;top:949.7px;font-size:14.5px;color:#007960;transform:scaleX(0.9610);">2/16/2022</div>
<div class="t" style="left:477.0px;top:979.9px;font-size:15px;color:#fff;">Details</div>
<div class="t" style="left:1861.0px;top:979.3px;font-size:14.3px;color:#333;transform:scaleX(0.9475);">Customize</div>
<div class="t" style="left:640.0px;top:1014.1px;font-size:15px;color:#212121;font-weight:700;transform:scaleX(0.9790);">Name</div>
<div class="t" style="left:1556.0px;top:1014.4px;font-size:15px;color:#212121;font-weight:700;transform:scaleX(0.9146);">Assets</div>
<div class="t" style="left:1767.0px;top:1014.4px;font-size:15px;color:#007960;font-weight:700;">Lane</div>
<div class="t" style="left:610.0px;top:1045.0px;font-size:15px;color:#333;transform:scaleX(1.0547);">g/L</div>
<div class="t" style="left:640.0px;top:1045.0px;font-size:15px;color:#212121;font-weight:700;">Solution Concentration</div>
<div class="t" style="left:1556.0px;top:1045.0px;font-size:15px;color:#007960;transform:scaleX(0.9685);text-decoration:underline">Reactor 1</div>
<div class="t" style="left:1809.0px;top:1045.0px;font-size:15px;color:#333;transform:scaleX(0.8390);">1</div>
<div class="t" style="left:610.0px;top:1074.4px;font-size:15px;color:#333;transform:scaleX(1.0547);">g/L</div>
<div class="t" style="left:640.0px;top:1074.4px;font-size:15px;color:#212121;font-weight:700;">Solution Concentration</div>
<div class="t" style="left:1556.0px;top:1074.4px;font-size:15px;color:#007960;transform:scaleX(0.9685);text-decoration:underline">Reactor 2</div>
<div class="t" style="left:1809.0px;top:1074.4px;font-size:15px;color:#333;transform:scaleX(0.8390);">1</div>
<div class="t" style="left:610.0px;top:1103.9px;font-size:15px;color:#333;transform:scaleX(1.0547);">g/L</div>
<div class="t" style="left:640.0px;top:1103.9px;font-size:15px;color:#212121;font-weight:700;">Solution Concentration</div>
<div class="t" style="left:1556.0px;top:1103.9px;font-size:15px;color:#007960;transform:scaleX(0.9685);text-decoration:underline">Reactor 3</div>
<div class="t" style="left:1809.0px;top:1103.9px;font-size:15px;color:#333;transform:scaleX(0.8390);">1</div>
<div class="t" style="left:610.0px;top:1133.0px;font-size:15px;color:#333;transform:scaleX(1.0547);">g/L</div>
<div class="t" style="left:640.0px;top:1133.0px;font-size:15px;color:#212121;font-weight:700;">Solution Concentration</div>
<div class="t" style="left:1556.0px;top:1133.0px;font-size:15px;color:#007960;transform:scaleX(0.9685);text-decoration:underline">Reactor 4</div>
<div class="t" style="left:1809.0px;top:1133.0px;font-size:15px;color:#333;transform:scaleX(0.8390);">1</div>
<div class="t" style="left:1986.0px;top:979.9px;font-size:15px;color:#fff;transform:scaleX(0.9593);">Capsules</div>
<div class="t" style="left:2226.7px;top:979.9px;font-size:15px;color:#fff;transform:scaleX(0.9597);">02:40:37.911</div>
<div class="t" style="left:2011.0px;top:1020.9px;font-size:15px;color:#212121;font-weight:700;transform:scaleX(1.0530);">Start</div>
<div class="t" style="left:2167.0px;top:1020.9px;font-size:15px;color:#007960;font-weight:700;transform:scaleX(1.0053);">Duration</div>
<div class="t" style="left:2012.0px;top:1050.9px;font-size:15px;color:#333;transform:scaleX(0.9464);">Feb 11, 2022 11:24 AM</div>
<div class="t" style="left:2166.4px;top:1050.9px;font-size:15px;color:#333;transform:scaleX(0.9590);">04:50:00.000</div>
<div class="t" style="left:2012.0px;top:1079.5px;font-size:15px;color:#333;transform:scaleX(0.9284);">Feb 9, 2022 7:10 AM</div>
<div class="t" style="left:2166.4px;top:1079.5px;font-size:15px;color:#333;transform:scaleX(0.9590);">05:18:00.000</div>
<div class="t" style="left:2012.0px;top:1109.0px;font-size:15px;color:#333;transform:scaleX(0.9315);">Feb 10, 2022 8:22 AM</div>
<div class="t" style="left:2166.4px;top:1109.0px;font-size:15px;color:#333;transform:scaleX(0.9590);">05:34:00.000</div>
<div class="t" style="left:2012.0px;top:1138.4px;font-size:15px;color:#333;transform:scaleX(0.9397);">Feb 12, 2022 11:40 AM</div>
<div class="t" style="left:2166.4px;top:1138.4px;font-size:15px;color:#333;transform:scaleX(0.9590);">06:16:00.000</div>
</body></html>
